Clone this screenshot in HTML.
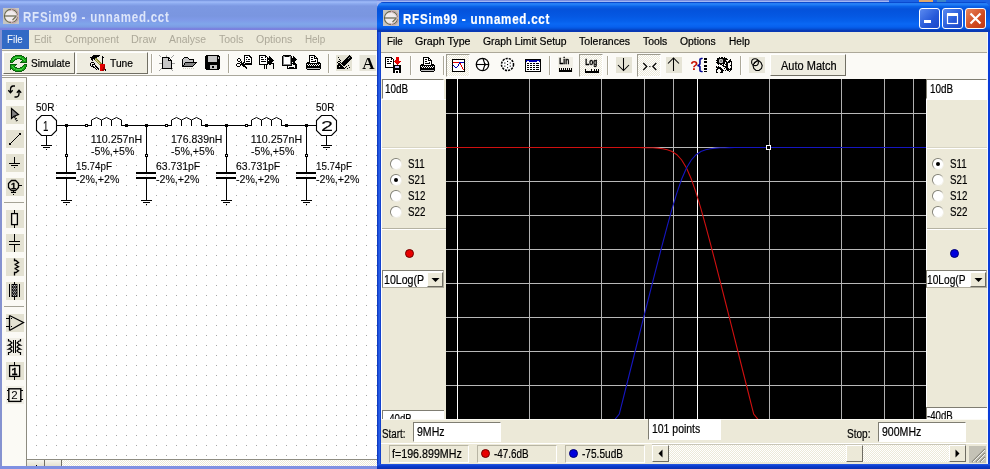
<!DOCTYPE html>
<html lang="en"><head><meta charset="utf-8"><title>RFSim99 - unnamed.cct</title>
<style>
html,body{margin:0;padding:0;}
body{width:990px;height:469px;overflow:hidden;background:#ece9d8;font-family:"Liberation Sans",sans-serif;font-size:11px;}
#screen{will-change:transform;position:relative;width:990px;height:469px;overflow:hidden;background:#ece9d8;}
#screen div,#screen span,#screen svg{position:absolute;box-sizing:border-box;}
.t{white-space:pre;line-height:16px;height:16px;font-family:"Liberation Sans",sans-serif;transform-origin:0 0;-webkit-text-stroke:0.22px currentColor;}
svg{overflow:visible;}

.raised{border:1px solid;border-color:#fff #716f64 #716f64 #fff;background:#efede1;}
.sunk{border:1px solid;border-color:#716f64 #fff #fff #716f64;background:#fff;}
.vsep{width:2px;border-left:1px solid #aca899;border-right:1px solid #fff;}

</style></head><body>
<div id="screen">
<div id="winL" style="left:0;top:0;width:377px;height:469px;"><div style="left:0px;top:0px;width:377px;height:30px;background:linear-gradient(#6f8cd8 0px,#8aa8ee 1px,#9fbaf8 2px,#8eacf0 3.5px,#7c98e2 6px,#7a96e0 16px,#7f9ae8 20px,#80a6ea 24px,#7c9ce4 27px,#7a80de 28.7px,#7a80de 30px);"></div>
<span class="t" style="left:23.30px;top:9.00px;font-size:13.81px;color:#dde6fa;font-weight:bold;letter-spacing:0.9px;transform:scaleX(0.8364);-webkit-text-stroke:0;">RFSim99 - unnamed.cct</span>
<div style="left:0px;top:30px;width:377px;height:20px;background:#ece9d8;"></div>
<div style="left:1px;top:30px;width:28px;height:19px;background:#316ac5;"></div>
<span class="t" style="left:6.50px;top:31.00px;font-size:11.63px;color:#fff;transform:scaleX(0.8427);-webkit-text-stroke:0;">File</span>
<span class="t" style="left:34.40px;top:31.00px;font-size:11.63px;color:#aca899;transform:scaleX(0.8737);-webkit-text-stroke:0;">Edit</span>
<span class="t" style="left:65.00px;top:31.00px;font-size:11.63px;color:#aca899;transform:scaleX(0.8966);-webkit-text-stroke:0;">Component</span>
<span class="t" style="left:131.40px;top:31.00px;font-size:11.63px;color:#aca899;transform:scaleX(0.9308);-webkit-text-stroke:0;">Draw</span>
<span class="t" style="left:168.90px;top:31.00px;font-size:11.63px;color:#aca899;transform:scaleX(0.8969);-webkit-text-stroke:0;">Analyse</span>
<span class="t" style="left:219.30px;top:31.00px;font-size:11.63px;color:#aca899;transform:scaleX(0.9024);-webkit-text-stroke:0;">Tools</span>
<span class="t" style="left:255.90px;top:31.00px;font-size:11.63px;color:#aca899;transform:scaleX(0.9080);-webkit-text-stroke:0;">Options</span>
<span class="t" style="left:304.70px;top:31.00px;font-size:11.63px;color:#aca899;transform:scaleX(0.8485);-webkit-text-stroke:0;">Help</span>
<div style="left:0px;top:50px;width:377px;height:1px;background:#aca899;"></div>
<div style="left:0px;top:51px;width:377px;height:24px;background:#fbfaf6;"></div>
<div style="left:0px;top:75px;width:377px;height:1px;background:#aaa89c;"></div>
<div style="left:0px;top:76px;width:377px;height:1px;background:#fff;"></div>
<div class="raised" style="left:3px;top:52px;width:72px;height:22px;"></div>
<span class="t" style="left:30.90px;top:55.00px;font-size:11.63px;color:#000;transform:scaleX(0.8688);">Simulate</span>
<div class="raised" style="left:76px;top:52px;width:72px;height:22px;"></div>
<span class="t" style="left:110.30px;top:55.00px;font-size:11.63px;color:#000;transform:scaleX(0.8821);">Tune</span>
<div class="vsep" style="left:151px;top:54px;width:2px;height:19px;"></div>
<div class="vsep" style="left:228px;top:54px;width:2px;height:19px;"></div>
<div class="vsep" style="left:328px;top:54px;width:2px;height:19px;"></div>
<div style="left:0px;top:30px;width:2px;height:439px;background:#8592d0;"></div>
<div style="left:2px;top:77px;width:24px;height:389px;background:#fbfaf5;"></div>
<div style="left:26px;top:77px;width:1px;height:389px;background:#8d8b80;"></div>
<div style="left:2px;top:77px;width:25px;height:1px;background:#a09e92;"></div>
<div style="left:6px;top:82px;width:18px;height:18px;background:#e4e2d2;"></div>
<div style="left:6px;top:106px;width:18px;height:18px;background:#e4e2d2;"></div>
<div style="left:6px;top:130px;width:18px;height:18px;background:#e4e2d2;"></div>
<div style="left:6px;top:154px;width:18px;height:18px;background:#e4e2d2;"></div>
<div style="left:6px;top:178px;width:18px;height:18px;background:#e4e2d2;"></div>
<div style="left:6px;top:210px;width:18px;height:18px;background:#e4e2d2;"></div>
<div style="left:6px;top:234px;width:18px;height:18px;background:#e4e2d2;"></div>
<div style="left:6px;top:258px;width:18px;height:18px;background:#e4e2d2;"></div>
<div style="left:6px;top:282px;width:18px;height:18px;background:#e4e2d2;"></div>
<div style="left:6px;top:314px;width:18px;height:18px;background:#e4e2d2;"></div>
<div style="left:6px;top:338px;width:18px;height:18px;background:#f1efe6;"></div>
<div style="left:6px;top:362px;width:18px;height:18px;background:#e4e2d2;"></div>
<div style="left:6px;top:386px;width:18px;height:18px;background:#f1efe6;"></div>
<div style="left:4px;top:202px;width:20px;height:1px;background:#a5a396;"></div>
<div style="left:4px;top:306px;width:20px;height:1px;background:#a5a396;"></div>
<div style="left:27px;top:77px;width:350px;height:382px;background-color:#fff;background-image:linear-gradient(90deg,#fff 9px,transparent 9px),linear-gradient(#fff 9px,#a8a8a8 9px);background-size:10px 10px;background-position:0px -1px;"></div>
<svg width="990" height="469" viewBox="0 0 990 469" style="left:0;top:0;pointer-events:none">
<g fill="none" stroke="#000" stroke-width="1" shape-rendering="crispEdges">
<path d="M57 125.5H86"/>
<rect x="85.5" y="124.5" width="2" height="2" fill="#fff"/>
<path d="M87.5 125.5H91.5V120.0"/>
<path d="M101.5 120.0V125.5M111.5 120.0V125.5M121.5 120.0V125.5H146.5"/>
<rect x="125.0" y="124.0" width="3" height="3" fill="#000" stroke="none"/>
<rect x="165.5" y="124.5" width="2" height="2" fill="#fff"/>
<path d="M167.5 125.5H171.5V120.0"/>
<path d="M181.5 120.0V125.5M191.5 120.0V125.5M201.5 120.0V125.5H226.5"/>
<rect x="205.0" y="124.0" width="3" height="3" fill="#000" stroke="none"/>
<rect x="245.5" y="124.5" width="2" height="2" fill="#fff"/>
<path d="M247.5 125.5H251.5V120.0"/>
<path d="M261.5 120.0V125.5M271.5 120.0V125.5M281.5 120.0V125.5H306.5"/>
<rect x="285.0" y="124.0" width="3" height="3" fill="#000" stroke="none"/>
<path d="M306 125.5H316M146 125.5H165M226 125.5H245"/>
<rect x="65.0" y="124.0" width="3" height="3" fill="#000" stroke="none"/>
<path d="M66.5 125.5V172M66.5 179V200"/>
<rect x="65.5" y="154.5" width="2" height="2" fill="#fff"/>
<rect x="56.0" y="172" width="20" height="2" fill="#000" stroke="none"/>
<rect x="56.0" y="177" width="20" height="2" fill="#000" stroke="none"/>
<path d="M61.0 200.5H72.0M63.0 202.5H70.0M66.0 204.5H67.0"/>
<rect x="145.0" y="124.0" width="3" height="3" fill="#000" stroke="none"/>
<path d="M146.5 125.5V172M146.5 179V200"/>
<rect x="145.5" y="154.5" width="2" height="2" fill="#fff"/>
<rect x="136.0" y="172" width="20" height="2" fill="#000" stroke="none"/>
<rect x="136.0" y="177" width="20" height="2" fill="#000" stroke="none"/>
<path d="M141.0 200.5H152.0M143.0 202.5H150.0M146.0 204.5H147.0"/>
<rect x="225.0" y="124.0" width="3" height="3" fill="#000" stroke="none"/>
<path d="M226.5 125.5V172M226.5 179V200"/>
<rect x="225.5" y="154.5" width="2" height="2" fill="#fff"/>
<rect x="216.0" y="172" width="20" height="2" fill="#000" stroke="none"/>
<rect x="216.0" y="177" width="20" height="2" fill="#000" stroke="none"/>
<path d="M221.0 200.5H232.0M223.0 202.5H230.0M226.0 204.5H227.0"/>
<rect x="305.0" y="124.0" width="3" height="3" fill="#000" stroke="none"/>
<path d="M306.5 125.5V172M306.5 179V200"/>
<rect x="305.5" y="154.5" width="2" height="2" fill="#fff"/>
<rect x="296.0" y="172" width="20" height="2" fill="#000" stroke="none"/>
<rect x="296.0" y="177" width="20" height="2" fill="#000" stroke="none"/>
<path d="M301.0 200.5H312.0M303.0 202.5H310.0M306.0 204.5H307.0"/>
<path d="M46.5 136V145M41.0 145.5H52.0M43.0 147.5H50.0M46.0 149.5H47.0"/>
<path d="M326.5 136V145M321.0 145.5H332.0M323.0 147.5H330.0M326.0 149.5H327.0"/>
</g>
<g fill="none" stroke="#000" stroke-width="1">
<path d="M91.5 120.0L93.5 119.0L96.5 117.5L99.5 119.0L101.5 120.0M101.5 120.0L103.5 119.0L106.5 117.5L109.5 119.0L111.5 120.0M111.5 120.0L113.5 119.0L116.5 117.5L119.5 119.0L121.5 120.0"/>
<path d="M171.5 120.0L173.5 119.0L176.5 117.5L179.5 119.0L181.5 120.0M181.5 120.0L183.5 119.0L186.5 117.5L189.5 119.0L191.5 120.0M191.5 120.0L193.5 119.0L196.5 117.5L199.5 119.0L201.5 120.0"/>
<path d="M251.5 120.0L253.5 119.0L256.5 117.5L259.5 119.0L261.5 120.0M261.5 120.0L263.5 119.0L266.5 117.5L269.5 119.0L271.5 120.0M271.5 120.0L273.5 119.0L276.5 117.5L279.5 119.0L281.5 120.0"/>
<polygon points="41.5,115.5 51.5,115.5 56.5,120.5 56.5,130.5 51.5,135.5 41.5,135.5 36.5,130.5 36.5,120.5" fill="#fff" stroke-width="1.1"/>
<polygon points="321.5,115.5 331.5,115.5 336.5,120.5 336.5,130.5 331.5,135.5 321.5,135.5 316.5,130.5 316.5,120.5" fill="#fff" stroke-width="1.1"/>
</g>
</svg>
<span class="t" style="left:36.00px;top:99.00px;font-size:10.67px;color:#000;transform:scaleX(0.9398);-webkit-text-stroke:0.1px #000;">50R</span>
<span class="t" style="left:316.00px;top:99.00px;font-size:10.67px;color:#000;transform:scaleX(0.9398);-webkit-text-stroke:0.1px #000;">50R</span>
<span class="t" style="left:43.40px;top:118.00px;font-size:14.50px;color:#000;transform:scaleX(0.6710);-webkit-text-stroke:0.1px #000;">1</span>
<span class="t" style="left:321.40px;top:118.00px;font-size:14.50px;color:#000;transform:scaleX(1.4911);-webkit-text-stroke:0.1px #000;">2</span>
<span class="t" style="left:90.80px;top:131.00px;font-size:10.67px;color:#000;-webkit-text-stroke:0.1px #000;">110.257nH</span>
<span class="t" style="left:91.20px;top:143.00px;font-size:10.67px;color:#000;transform:scaleX(0.9957);-webkit-text-stroke:0.1px #000;">-5%,+5%</span>
<span class="t" style="left:170.80px;top:131.00px;font-size:10.67px;color:#000;transform:scaleX(0.9865);-webkit-text-stroke:0.1px #000;">176.839nH</span>
<span class="t" style="left:171.20px;top:143.00px;font-size:10.67px;color:#000;transform:scaleX(0.9957);-webkit-text-stroke:0.1px #000;">-5%,+5%</span>
<span class="t" style="left:250.80px;top:131.00px;font-size:10.67px;color:#000;-webkit-text-stroke:0.1px #000;">110.257nH</span>
<span class="t" style="left:251.20px;top:143.00px;font-size:10.67px;color:#000;transform:scaleX(0.9957);-webkit-text-stroke:0.1px #000;">-5%,+5%</span>
<span class="t" style="left:76.00px;top:158.00px;font-size:10.67px;color:#000;transform:scaleX(0.9193);-webkit-text-stroke:0.1px #000;">15.74pF</span>
<span class="t" style="left:76.30px;top:171.00px;font-size:10.67px;color:#000;transform:scaleX(0.9957);-webkit-text-stroke:0.1px #000;">-2%,+2%</span>
<span class="t" style="left:155.50px;top:158.00px;font-size:10.67px;color:#000;transform:scaleX(0.9827);-webkit-text-stroke:0.1px #000;">63.731pF</span>
<span class="t" style="left:156.30px;top:171.00px;font-size:10.67px;color:#000;transform:scaleX(0.9957);-webkit-text-stroke:0.1px #000;">-2%,+2%</span>
<span class="t" style="left:235.50px;top:158.00px;font-size:10.67px;color:#000;transform:scaleX(0.9827);-webkit-text-stroke:0.1px #000;">63.731pF</span>
<span class="t" style="left:236.30px;top:171.00px;font-size:10.67px;color:#000;transform:scaleX(0.9957);-webkit-text-stroke:0.1px #000;">-2%,+2%</span>
<span class="t" style="left:316.00px;top:158.00px;font-size:10.67px;color:#000;transform:scaleX(0.9193);-webkit-text-stroke:0.1px #000;">15.74pF</span>
<span class="t" style="left:316.30px;top:171.00px;font-size:10.67px;color:#000;transform:scaleX(0.9957);-webkit-text-stroke:0.1px #000;">-2%,+2%</span>
<div style="left:27px;top:459px;width:350px;height:7px;background:#f4f3ee;background-image:repeating-conic-gradient(#fff 0% 25%,#ece9d8 0% 50%);background-size:2px 2px;"></div>
<div style="left:27px;top:460px;width:17px;height:6px;background:linear-gradient(#f6f5ee,#e4e1d0);"></div>
<div style="left:44px;top:460px;width:1px;height:6px;background:#716f64;"></div>
<div style="left:45px;top:460px;width:16px;height:6px;background:linear-gradient(#f6f5ee,#e4e1d0);"></div>
<div style="left:61px;top:460px;width:1px;height:6px;background:#716f64;"></div>
<div style="left:36px;top:465px;width:1px;height:1px;background:#000;"></div>
<div style="left:27px;top:459px;width:350px;height:1px;background:#8d8b80;"></div>
<div style="left:0px;top:466px;width:377px;height:3px;background:#7f90e2;"></div>
<svg width="990" height="469" viewBox="0 0 990 469" style="left:0;top:0;pointer-events:none" font-family="Liberation Sans, sans-serif">
<g transform="translate(3 8)" ><rect x="0" y="0" width="16" height="16" fill="#c6c6c2"/><circle cx="8" cy="8" r="6.6" fill="#f1ecec" stroke="#6a6a50" stroke-width="1.1"/><path d="M1.5 8H14.5" stroke="#5a5a40" stroke-width="1.1" fill="none"/><path d="M14.4 8A4.4 4.4 0 0 0 6.5 3.2M14.4 8A4.4 4.4 0 0 1 6.5 12.8" stroke="#c8a0a8" stroke-width="1" fill="none"/><path d="M14.4 8A9 9 0 0 0 8 2M14.4 8A9 9 0 0 1 8 14" stroke="#d8c0c4" stroke-width="0.8" fill="none"/><path d="M9.5 12L13 8.5" stroke="#6a6a50" stroke-width="1.1"/></g>
<g transform="translate(10 55)" ><g shape-rendering="crispEdges"><rect x="5" y="0" width="7" height="1" fill="#0a5e0a"/><rect x="3" y="1" width="2" height="1" fill="#0a5e0a"/><rect x="5" y="1" width="7" height="1" fill="#16a616"/><rect x="12" y="1" width="2" height="1" fill="#0a5e0a"/><rect x="2" y="2" width="1" height="1" fill="#0a5e0a"/><rect x="3" y="2" width="2" height="1" fill="#16a616"/><rect x="5" y="2" width="6" height="1" fill="#48d048"/><rect x="11" y="2" width="3" height="1" fill="#16a616"/><rect x="14" y="2" width="1" height="1" fill="#0a5e0a"/><rect x="16" y="2" width="1" height="1" fill="#0a5e0a"/><rect x="1" y="3" width="1" height="1" fill="#0a5e0a"/><rect x="2" y="3" width="2" height="1" fill="#16a616"/><rect x="4" y="3" width="1" height="1" fill="#48d048"/><rect x="5" y="3" width="2" height="1" fill="#16a616"/><rect x="7" y="3" width="3" height="1" fill="#0a5e0a"/><rect x="10" y="3" width="2" height="1" fill="#16a616"/><rect x="12" y="3" width="1" height="1" fill="#48d048"/><rect x="13" y="3" width="2" height="1" fill="#16a616"/><rect x="15" y="3" width="2" height="1" fill="#0a5e0a"/><rect x="1" y="4" width="1" height="1" fill="#0a5e0a"/><rect x="2" y="4" width="1" height="1" fill="#16a616"/><rect x="3" y="4" width="1" height="1" fill="#48d048"/><rect x="4" y="4" width="1" height="1" fill="#16a616"/><rect x="5" y="4" width="2" height="1" fill="#0a5e0a"/><rect x="10" y="4" width="2" height="1" fill="#0a5e0a"/><rect x="12" y="4" width="1" height="1" fill="#16a616"/><rect x="13" y="4" width="1" height="1" fill="#48d048"/><rect x="14" y="4" width="2" height="1" fill="#16a616"/><rect x="16" y="4" width="1" height="1" fill="#0a5e0a"/><rect x="0" y="5" width="1" height="1" fill="#0a5e0a"/><rect x="1" y="5" width="3" height="1" fill="#16a616"/><rect x="4" y="5" width="1" height="1" fill="#0a5e0a"/><rect x="12" y="5" width="1" height="1" fill="#0a5e0a"/><rect x="13" y="5" width="1" height="1" fill="#16a616"/><rect x="14" y="5" width="1" height="1" fill="#48d048"/><rect x="15" y="5" width="1" height="1" fill="#16a616"/><rect x="16" y="5" width="1" height="1" fill="#0a5e0a"/><rect x="0" y="6" width="1" height="1" fill="#0a5e0a"/><rect x="1" y="6" width="2" height="1" fill="#16a616"/><rect x="3" y="6" width="1" height="1" fill="#0a5e0a"/><rect x="11" y="6" width="1" height="1" fill="#0a5e0a"/><rect x="12" y="6" width="4" height="1" fill="#16a616"/><rect x="16" y="6" width="1" height="1" fill="#0a5e0a"/><rect x="0" y="7" width="3" height="1" fill="#0a5e0a"/><rect x="10" y="7" width="7" height="1" fill="#0a5e0a"/><rect x="0" y="9" width="7" height="1" fill="#0a5e0a"/><rect x="14" y="9" width="3" height="1" fill="#0a5e0a"/><rect x="0" y="10" width="1" height="1" fill="#0a5e0a"/><rect x="1" y="10" width="4" height="1" fill="#16a616"/><rect x="5" y="10" width="1" height="1" fill="#0a5e0a"/><rect x="13" y="10" width="1" height="1" fill="#0a5e0a"/><rect x="14" y="10" width="2" height="1" fill="#16a616"/><rect x="16" y="10" width="1" height="1" fill="#0a5e0a"/><rect x="0" y="11" width="1" height="1" fill="#0a5e0a"/><rect x="1" y="11" width="1" height="1" fill="#16a616"/><rect x="2" y="11" width="1" height="1" fill="#48d048"/><rect x="3" y="11" width="1" height="1" fill="#16a616"/><rect x="4" y="11" width="1" height="1" fill="#0a5e0a"/><rect x="12" y="11" width="1" height="1" fill="#0a5e0a"/><rect x="13" y="11" width="3" height="1" fill="#16a616"/><rect x="16" y="11" width="1" height="1" fill="#0a5e0a"/><rect x="0" y="12" width="1" height="1" fill="#0a5e0a"/><rect x="1" y="12" width="2" height="1" fill="#16a616"/><rect x="3" y="12" width="1" height="1" fill="#48d048"/><rect x="4" y="12" width="1" height="1" fill="#16a616"/><rect x="5" y="12" width="2" height="1" fill="#0a5e0a"/><rect x="10" y="12" width="2" height="1" fill="#0a5e0a"/><rect x="12" y="12" width="1" height="1" fill="#16a616"/><rect x="13" y="12" width="1" height="1" fill="#48d048"/><rect x="14" y="12" width="1" height="1" fill="#16a616"/><rect x="15" y="12" width="1" height="1" fill="#0a5e0a"/><rect x="0" y="13" width="2" height="1" fill="#0a5e0a"/><rect x="2" y="13" width="2" height="1" fill="#16a616"/><rect x="4" y="13" width="1" height="1" fill="#48d048"/><rect x="5" y="13" width="2" height="1" fill="#16a616"/><rect x="7" y="13" width="3" height="1" fill="#0a5e0a"/><rect x="10" y="13" width="2" height="1" fill="#16a616"/><rect x="12" y="13" width="1" height="1" fill="#48d048"/><rect x="13" y="13" width="2" height="1" fill="#16a616"/><rect x="15" y="13" width="1" height="1" fill="#0a5e0a"/><rect x="0" y="14" width="1" height="1" fill="#0a5e0a"/><rect x="2" y="14" width="1" height="1" fill="#0a5e0a"/><rect x="3" y="14" width="3" height="1" fill="#16a616"/><rect x="6" y="14" width="6" height="1" fill="#48d048"/><rect x="12" y="14" width="2" height="1" fill="#16a616"/><rect x="14" y="14" width="1" height="1" fill="#0a5e0a"/><rect x="3" y="15" width="2" height="1" fill="#0a5e0a"/><rect x="5" y="15" width="7" height="1" fill="#16a616"/><rect x="12" y="15" width="2" height="1" fill="#0a5e0a"/><rect x="5" y="16" width="7" height="1" fill="#0a5e0a"/></g></g>
<g transform="translate(90 55)" ><g shape-rendering="crispEdges"><rect x="3" y="0" width="7" height="1" fill="#000"/><rect x="2" y="1" width="7" height="1" fill="#000"/><rect x="12" y="1" width="1" height="1" fill="#000"/><rect x="0" y="2" width="7" height="1" fill="#000"/><rect x="12" y="2" width="2" height="1" fill="#000"/><rect x="1" y="3" width="4" height="1" fill="#000"/><rect x="5" y="3" width="2" height="1" fill="#8c8c3c"/><rect x="12" y="3" width="1" height="1" fill="#000"/><rect x="1" y="4" width="2" height="1" fill="#000"/><rect x="4" y="4" width="1" height="1" fill="#000"/><rect x="5" y="4" width="1" height="1" fill="#dcdc94"/><rect x="6" y="4" width="2" height="1" fill="#8c8c3c"/><rect x="12" y="4" width="1" height="1" fill="#000"/><rect x="2" y="5" width="1" height="1" fill="#000"/><rect x="5" y="5" width="1" height="1" fill="#8c8c3c"/><rect x="6" y="5" width="1" height="1" fill="#dcdc94"/><rect x="7" y="5" width="2" height="1" fill="#8c8c3c"/><rect x="12" y="5" width="1" height="1" fill="#000"/><rect x="6" y="6" width="1" height="1" fill="#8c8c3c"/><rect x="7" y="6" width="1" height="1" fill="#dcdc94"/><rect x="8" y="6" width="2" height="1" fill="#8c8c3c"/><rect x="12" y="6" width="1" height="1" fill="#000"/><rect x="1" y="7" width="3" height="1" fill="#000"/><rect x="7" y="7" width="1" height="1" fill="#8c8c3c"/><rect x="8" y="7" width="1" height="1" fill="#dcdc94"/><rect x="9" y="7" width="2" height="1" fill="#8c8c3c"/><rect x="12" y="7" width="1" height="1" fill="#000"/><rect x="0" y="8" width="1" height="1" fill="#000"/><rect x="4" y="8" width="1" height="1" fill="#000"/><rect x="8" y="8" width="1" height="1" fill="#8c8c3c"/><rect x="9" y="8" width="1" height="1" fill="#dcdc94"/><rect x="10" y="8" width="2" height="1" fill="#8c8c3c"/><rect x="12" y="8" width="1" height="1" fill="#000"/><rect x="0" y="9" width="1" height="1" fill="#000"/><rect x="2" y="9" width="3" height="1" fill="#000"/><rect x="9" y="9" width="1" height="1" fill="#8c8c3c"/><rect x="10" y="9" width="5" height="1" fill="#e60000"/><rect x="0" y="10" width="1" height="1" fill="#000"/><rect x="2" y="10" width="1" height="1" fill="#000"/><rect x="5" y="10" width="1" height="1" fill="#000"/><rect x="10" y="10" width="4" height="1" fill="#e60000"/><rect x="14" y="10" width="1" height="1" fill="#a00000"/><rect x="1" y="11" width="3" height="1" fill="#000"/><rect x="5" y="11" width="2" height="1" fill="#000"/><rect x="10" y="11" width="4" height="1" fill="#e60000"/><rect x="14" y="11" width="1" height="1" fill="#a00000"/><rect x="3" y="12" width="2" height="1" fill="#000"/><rect x="6" y="12" width="2" height="1" fill="#000"/><rect x="10" y="12" width="3" height="1" fill="#e60000"/><rect x="13" y="12" width="2" height="1" fill="#a00000"/><rect x="5" y="13" width="1" height="1" fill="#000"/><rect x="7" y="13" width="2" height="1" fill="#000"/><rect x="10" y="13" width="3" height="1" fill="#e60000"/><rect x="13" y="13" width="2" height="1" fill="#a00000"/><rect x="6" y="14" width="1" height="1" fill="#000"/><rect x="8" y="14" width="1" height="1" fill="#000"/><rect x="10" y="14" width="2" height="1" fill="#e60000"/><rect x="12" y="14" width="3" height="1" fill="#a00000"/><rect x="15" y="14" width="1" height="1" fill="#000"/><rect x="10" y="15" width="2" height="1" fill="#e60000"/><rect x="12" y="15" width="2" height="1" fill="#a00000"/><rect x="15" y="15" width="1" height="1" fill="#000"/></g></g>
<g transform="translate(159 55)" ><g shape-rendering="crispEdges"><rect x="0" y="0" width="1" height="1" fill="#a0a0a0"/><rect x="7" y="0" width="1" height="1" fill="#a0a0a0"/><rect x="14" y="0" width="1" height="1" fill="#a0a0a0"/><rect x="1" y="1" width="1" height="1" fill="#a0a0a0"/><rect x="7" y="1" width="1" height="1" fill="#a0a0a0"/><rect x="13" y="1" width="1" height="1" fill="#a0a0a0"/><rect x="3" y="2" width="7" height="1" fill="#000"/><rect x="10" y="2" width="1" height="1" fill="#a0a0a0"/><rect x="12" y="2" width="1" height="1" fill="#a0a0a0"/><rect x="3" y="3" width="1" height="1" fill="#000"/><rect x="4" y="3" width="5" height="1" fill="#c6c6c6"/><rect x="9" y="3" width="2" height="1" fill="#000"/><rect x="3" y="4" width="1" height="1" fill="#000"/><rect x="4" y="4" width="5" height="1" fill="#c6c6c6"/><rect x="9" y="4" width="1" height="1" fill="#000"/><rect x="10" y="4" width="1" height="1" fill="#fff"/><rect x="11" y="4" width="1" height="1" fill="#000"/><rect x="3" y="5" width="1" height="1" fill="#000"/><rect x="4" y="5" width="5" height="1" fill="#c6c6c6"/><rect x="9" y="5" width="4" height="1" fill="#000"/><rect x="3" y="6" width="1" height="1" fill="#000"/><rect x="4" y="6" width="8" height="1" fill="#c6c6c6"/><rect x="12" y="6" width="1" height="1" fill="#000"/><rect x="3" y="7" width="1" height="1" fill="#000"/><rect x="4" y="7" width="8" height="1" fill="#c6c6c6"/><rect x="12" y="7" width="1" height="1" fill="#000"/><rect x="0" y="8" width="3" height="1" fill="#a0a0a0"/><rect x="3" y="8" width="1" height="1" fill="#000"/><rect x="4" y="8" width="8" height="1" fill="#c6c6c6"/><rect x="12" y="8" width="1" height="1" fill="#000"/><rect x="13" y="8" width="3" height="1" fill="#a0a0a0"/><rect x="3" y="9" width="1" height="1" fill="#000"/><rect x="4" y="9" width="8" height="1" fill="#c6c6c6"/><rect x="12" y="9" width="1" height="1" fill="#000"/><rect x="3" y="10" width="1" height="1" fill="#000"/><rect x="4" y="10" width="8" height="1" fill="#c6c6c6"/><rect x="12" y="10" width="1" height="1" fill="#000"/><rect x="3" y="11" width="1" height="1" fill="#000"/><rect x="4" y="11" width="8" height="1" fill="#c6c6c6"/><rect x="12" y="11" width="1" height="1" fill="#000"/><rect x="3" y="12" width="1" height="1" fill="#000"/><rect x="4" y="12" width="8" height="1" fill="#c6c6c6"/><rect x="12" y="12" width="1" height="1" fill="#000"/><rect x="2" y="13" width="1" height="1" fill="#a0a0a0"/><rect x="3" y="13" width="10" height="1" fill="#000"/><rect x="13" y="13" width="1" height="1" fill="#a0a0a0"/><rect x="1" y="14" width="1" height="1" fill="#a0a0a0"/><rect x="12" y="14" width="1" height="1" fill="#a0a0a0"/><rect x="0" y="15" width="1" height="1" fill="#a0a0a0"/><rect x="13" y="15" width="1" height="1" fill="#a0a0a0"/></g></g>
<g transform="translate(182 55)" ><g shape-rendering="crispEdges"><rect x="2" y="2" width="4" height="1" fill="#000"/><rect x="1" y="3" width="1" height="1" fill="#000"/><rect x="2" y="3" width="4" height="1" fill="#c6c6c6"/><rect x="6" y="3" width="1" height="1" fill="#000"/><rect x="0" y="4" width="1" height="1" fill="#000"/><rect x="1" y="4" width="6" height="1" fill="#c6c6c6"/><rect x="7" y="4" width="5" height="1" fill="#000"/><rect x="0" y="5" width="1" height="1" fill="#000"/><rect x="1" y="5" width="10" height="1" fill="#c6c6c6"/><rect x="11" y="5" width="1" height="1" fill="#000"/><rect x="0" y="6" width="1" height="1" fill="#000"/><rect x="1" y="6" width="10" height="1" fill="#c6c6c6"/><rect x="11" y="6" width="1" height="1" fill="#000"/><rect x="0" y="7" width="1" height="1" fill="#000"/><rect x="1" y="7" width="2" height="1" fill="#c6c6c6"/><rect x="3" y="7" width="12" height="1" fill="#000"/><rect x="0" y="8" width="1" height="1" fill="#000"/><rect x="1" y="8" width="1" height="1" fill="#c6c6c6"/><rect x="2" y="8" width="1" height="1" fill="#000"/><rect x="3" y="8" width="10" height="1" fill="#868686"/><rect x="13" y="8" width="1" height="1" fill="#000"/><rect x="0" y="9" width="1" height="1" fill="#000"/><rect x="1" y="9" width="1" height="1" fill="#c6c6c6"/><rect x="2" y="9" width="1" height="1" fill="#000"/><rect x="3" y="9" width="9" height="1" fill="#868686"/><rect x="12" y="9" width="1" height="1" fill="#000"/><rect x="0" y="10" width="2" height="1" fill="#000"/><rect x="2" y="10" width="9" height="1" fill="#868686"/><rect x="11" y="10" width="1" height="1" fill="#000"/><rect x="0" y="11" width="11" height="1" fill="#000"/><rect x="1" y="13" width="1" height="1" fill="#d0cdbc"/><rect x="3" y="13" width="1" height="1" fill="#d0cdbc"/><rect x="5" y="13" width="1" height="1" fill="#d0cdbc"/><rect x="7" y="13" width="1" height="1" fill="#d0cdbc"/><rect x="9" y="13" width="1" height="1" fill="#d0cdbc"/><rect x="11" y="13" width="1" height="1" fill="#d0cdbc"/></g></g>
<g transform="translate(205 55)" ><g shape-rendering="crispEdges"><rect x="1" y="0" width="13" height="1" fill="#000"/><rect x="0" y="1" width="3" height="1" fill="#000"/><rect x="3" y="1" width="9" height="1" fill="#c6c6c6"/><rect x="12" y="1" width="3" height="1" fill="#000"/><rect x="0" y="2" width="3" height="1" fill="#000"/><rect x="3" y="2" width="9" height="1" fill="#c6c6c6"/><rect x="12" y="2" width="1" height="1" fill="#000"/><rect x="13" y="2" width="1" height="1" fill="#c6c6c6"/><rect x="14" y="2" width="1" height="1" fill="#000"/><rect x="0" y="3" width="3" height="1" fill="#000"/><rect x="3" y="3" width="9" height="1" fill="#c6c6c6"/><rect x="12" y="3" width="1" height="1" fill="#000"/><rect x="13" y="3" width="1" height="1" fill="#c6c6c6"/><rect x="14" y="3" width="1" height="1" fill="#000"/><rect x="0" y="4" width="3" height="1" fill="#000"/><rect x="3" y="4" width="9" height="1" fill="#c6c6c6"/><rect x="12" y="4" width="3" height="1" fill="#000"/><rect x="0" y="5" width="3" height="1" fill="#000"/><rect x="3" y="5" width="9" height="1" fill="#c6c6c6"/><rect x="12" y="5" width="3" height="1" fill="#000"/><rect x="0" y="6" width="3" height="1" fill="#000"/><rect x="3" y="6" width="9" height="1" fill="#c6c6c6"/><rect x="12" y="6" width="3" height="1" fill="#000"/><rect x="0" y="7" width="15" height="1" fill="#000"/><rect x="0" y="8" width="15" height="1" fill="#000"/><rect x="0" y="9" width="15" height="1" fill="#000"/><rect x="0" y="10" width="5" height="1" fill="#000"/><rect x="5" y="10" width="7" height="1" fill="#c6c6c6"/><rect x="12" y="10" width="3" height="1" fill="#000"/><rect x="0" y="11" width="5" height="1" fill="#000"/><rect x="5" y="11" width="2" height="1" fill="#c6c6c6"/><rect x="7" y="11" width="2" height="1" fill="#000"/><rect x="9" y="11" width="3" height="1" fill="#c6c6c6"/><rect x="12" y="11" width="3" height="1" fill="#000"/><rect x="0" y="12" width="5" height="1" fill="#000"/><rect x="5" y="12" width="2" height="1" fill="#c6c6c6"/><rect x="7" y="12" width="2" height="1" fill="#000"/><rect x="9" y="12" width="3" height="1" fill="#c6c6c6"/><rect x="12" y="12" width="3" height="1" fill="#000"/><rect x="0" y="13" width="5" height="1" fill="#000"/><rect x="5" y="13" width="7" height="1" fill="#c6c6c6"/><rect x="12" y="13" width="3" height="1" fill="#000"/><rect x="1" y="14" width="13" height="1" fill="#000"/></g></g>
<g transform="translate(236 55)" ><g shape-rendering="crispEdges"><rect x="8" y="0" width="6" height="1" fill="#000"/><rect x="8" y="1" width="1" height="1" fill="#000"/><rect x="9" y="1" width="4" height="1" fill="#fff"/><rect x="13" y="1" width="2" height="1" fill="#000"/><rect x="8" y="2" width="1" height="1" fill="#000"/><rect x="9" y="2" width="1" height="1" fill="#fff"/><rect x="10" y="2" width="2" height="1" fill="#000"/><rect x="12" y="2" width="2" height="1" fill="#fff"/><rect x="14" y="2" width="2" height="1" fill="#000"/><rect x="2" y="3" width="2" height="1" fill="#000"/><rect x="8" y="3" width="1" height="1" fill="#000"/><rect x="9" y="3" width="6" height="1" fill="#fff"/><rect x="15" y="3" width="1" height="1" fill="#000"/><rect x="1" y="4" width="1" height="1" fill="#000"/><rect x="4" y="4" width="1" height="1" fill="#000"/><rect x="8" y="4" width="1" height="1" fill="#000"/><rect x="9" y="4" width="1" height="1" fill="#fff"/><rect x="10" y="4" width="1" height="1" fill="#000"/><rect x="11" y="4" width="1" height="1" fill="#fff"/><rect x="12" y="4" width="2" height="1" fill="#000"/><rect x="14" y="4" width="1" height="1" fill="#fff"/><rect x="15" y="4" width="1" height="1" fill="#000"/><rect x="1" y="5" width="1" height="1" fill="#000"/><rect x="4" y="5" width="1" height="1" fill="#000"/><rect x="8" y="5" width="1" height="1" fill="#000"/><rect x="9" y="5" width="6" height="1" fill="#fff"/><rect x="15" y="5" width="1" height="1" fill="#000"/><rect x="2" y="6" width="2" height="1" fill="#000"/><rect x="5" y="6" width="1" height="1" fill="#000"/><rect x="8" y="6" width="1" height="1" fill="#000"/><rect x="9" y="6" width="1" height="1" fill="#fff"/><rect x="10" y="6" width="4" height="1" fill="#000"/><rect x="14" y="6" width="1" height="1" fill="#fff"/><rect x="15" y="6" width="1" height="1" fill="#000"/><rect x="4" y="7" width="2" height="1" fill="#000"/><rect x="7" y="7" width="2" height="1" fill="#000"/><rect x="9" y="7" width="6" height="1" fill="#fff"/><rect x="15" y="7" width="1" height="1" fill="#000"/><rect x="1" y="8" width="3" height="1" fill="#000"/><rect x="5" y="8" width="3" height="1" fill="#000"/><rect x="9" y="8" width="7" height="1" fill="#000"/><rect x="0" y="9" width="1" height="1" fill="#000"/><rect x="4" y="9" width="12" height="1" fill="#000"/><rect x="0" y="10" width="1" height="1" fill="#000"/><rect x="4" y="10" width="1" height="1" fill="#000"/><rect x="6" y="10" width="3" height="1" fill="#000"/><rect x="1" y="11" width="3" height="1" fill="#000"/><rect x="7" y="11" width="3" height="1" fill="#000"/><rect x="9" y="12" width="2" height="1" fill="#000"/><rect x="10" y="13" width="1" height="1" fill="#000"/></g></g>
<g transform="translate(259 55)" ><g shape-rendering="crispEdges"><rect x="0" y="0" width="7" height="1" fill="#000"/><rect x="0" y="1" width="1" height="1" fill="#000"/><rect x="1" y="1" width="5" height="1" fill="#fff"/><rect x="6" y="1" width="2" height="1" fill="#000"/><rect x="10" y="1" width="1" height="1" fill="#000"/><rect x="0" y="2" width="1" height="1" fill="#000"/><rect x="1" y="2" width="1" height="1" fill="#fff"/><rect x="2" y="2" width="2" height="1" fill="#000"/><rect x="4" y="2" width="2" height="1" fill="#fff"/><rect x="6" y="2" width="1" height="1" fill="#000"/><rect x="7" y="2" width="1" height="1" fill="#fff"/><rect x="8" y="2" width="1" height="1" fill="#000"/><rect x="10" y="2" width="2" height="1" fill="#000"/><rect x="0" y="3" width="1" height="1" fill="#000"/><rect x="1" y="3" width="7" height="1" fill="#fff"/><rect x="8" y="3" width="5" height="1" fill="#000"/><rect x="0" y="4" width="1" height="1" fill="#000"/><rect x="1" y="4" width="1" height="1" fill="#fff"/><rect x="2" y="4" width="3" height="1" fill="#000"/><rect x="5" y="4" width="1" height="1" fill="#fff"/><rect x="6" y="4" width="1" height="1" fill="#000"/><rect x="7" y="4" width="1" height="1" fill="#fff"/><rect x="8" y="4" width="6" height="1" fill="#000"/><rect x="0" y="5" width="1" height="1" fill="#000"/><rect x="1" y="5" width="7" height="1" fill="#fff"/><rect x="8" y="5" width="1" height="1" fill="#000"/><rect x="9" y="5" width="1" height="1" fill="#fff"/><rect x="10" y="5" width="5" height="1" fill="#000"/><rect x="0" y="6" width="1" height="1" fill="#000"/><rect x="1" y="6" width="1" height="1" fill="#fff"/><rect x="2" y="6" width="5" height="1" fill="#000"/><rect x="7" y="6" width="1" height="1" fill="#fff"/><rect x="8" y="6" width="6" height="1" fill="#000"/><rect x="0" y="7" width="1" height="1" fill="#000"/><rect x="1" y="7" width="7" height="1" fill="#fff"/><rect x="8" y="7" width="5" height="1" fill="#000"/><rect x="0" y="8" width="1" height="1" fill="#000"/><rect x="1" y="8" width="7" height="1" fill="#fff"/><rect x="8" y="8" width="7" height="1" fill="#000"/><rect x="0" y="9" width="9" height="1" fill="#000"/><rect x="10" y="9" width="2" height="1" fill="#000"/><rect x="14" y="9" width="1" height="1" fill="#000"/><rect x="5" y="10" width="1" height="1" fill="#000"/><rect x="7" y="10" width="1" height="1" fill="#000"/><rect x="14" y="10" width="1" height="1" fill="#000"/><rect x="5" y="11" width="1" height="1" fill="#000"/><rect x="7" y="11" width="1" height="1" fill="#000"/><rect x="14" y="11" width="1" height="1" fill="#000"/><rect x="5" y="12" width="1" height="1" fill="#000"/><rect x="7" y="12" width="1" height="1" fill="#000"/><rect x="14" y="12" width="1" height="1" fill="#000"/><rect x="5" y="13" width="1" height="1" fill="#000"/><rect x="7" y="13" width="1" height="1" fill="#000"/><rect x="14" y="13" width="1" height="1" fill="#000"/></g></g>
<g transform="translate(282 55)" ><g shape-rendering="crispEdges"><rect x="1" y="0" width="8" height="1" fill="#000"/><rect x="0" y="1" width="1" height="1" fill="#000"/><rect x="1" y="1" width="2" height="1" fill="#868686"/><rect x="3" y="1" width="4" height="1" fill="#000"/><rect x="7" y="1" width="2" height="1" fill="#868686"/><rect x="9" y="1" width="1" height="1" fill="#000"/><rect x="11" y="1" width="1" height="1" fill="#000"/><rect x="0" y="2" width="1" height="1" fill="#000"/><rect x="1" y="2" width="1" height="1" fill="#868686"/><rect x="2" y="2" width="6" height="1" fill="#fff"/><rect x="8" y="2" width="1" height="1" fill="#868686"/><rect x="9" y="2" width="1" height="1" fill="#000"/><rect x="11" y="2" width="2" height="1" fill="#000"/><rect x="0" y="3" width="1" height="1" fill="#000"/><rect x="1" y="3" width="1" height="1" fill="#868686"/><rect x="2" y="3" width="6" height="1" fill="#fff"/><rect x="8" y="3" width="1" height="1" fill="#868686"/><rect x="9" y="3" width="5" height="1" fill="#000"/><rect x="0" y="4" width="1" height="1" fill="#000"/><rect x="1" y="4" width="1" height="1" fill="#868686"/><rect x="2" y="4" width="6" height="1" fill="#fff"/><rect x="8" y="4" width="1" height="1" fill="#868686"/><rect x="9" y="4" width="6" height="1" fill="#000"/><rect x="0" y="5" width="1" height="1" fill="#000"/><rect x="1" y="5" width="1" height="1" fill="#868686"/><rect x="2" y="5" width="6" height="1" fill="#fff"/><rect x="8" y="5" width="1" height="1" fill="#868686"/><rect x="9" y="5" width="5" height="1" fill="#000"/><rect x="0" y="6" width="1" height="1" fill="#000"/><rect x="1" y="6" width="1" height="1" fill="#868686"/><rect x="2" y="6" width="6" height="1" fill="#fff"/><rect x="8" y="6" width="1" height="1" fill="#868686"/><rect x="9" y="6" width="4" height="1" fill="#000"/><rect x="0" y="7" width="1" height="1" fill="#000"/><rect x="1" y="7" width="1" height="1" fill="#868686"/><rect x="2" y="7" width="6" height="1" fill="#fff"/><rect x="8" y="7" width="1" height="1" fill="#868686"/><rect x="9" y="7" width="1" height="1" fill="#000"/><rect x="10" y="7" width="1" height="1" fill="#fff"/><rect x="11" y="7" width="2" height="1" fill="#000"/><rect x="0" y="8" width="1" height="1" fill="#000"/><rect x="1" y="8" width="1" height="1" fill="#868686"/><rect x="2" y="8" width="6" height="1" fill="#fff"/><rect x="8" y="8" width="1" height="1" fill="#868686"/><rect x="9" y="8" width="5" height="1" fill="#000"/><rect x="0" y="9" width="1" height="1" fill="#000"/><rect x="1" y="9" width="8" height="1" fill="#868686"/><rect x="9" y="9" width="1" height="1" fill="#000"/><rect x="11" y="9" width="4" height="1" fill="#000"/><rect x="0" y="10" width="10" height="1" fill="#000"/><rect x="13" y="10" width="2" height="1" fill="#000"/><rect x="5" y="11" width="1" height="1" fill="#000"/><rect x="9" y="11" width="2" height="1" fill="#fff"/><rect x="13" y="11" width="2" height="1" fill="#000"/><rect x="5" y="12" width="1" height="1" fill="#000"/><rect x="7" y="12" width="5" height="1" fill="#000"/><rect x="13" y="12" width="2" height="1" fill="#000"/><rect x="5" y="13" width="10" height="1" fill="#000"/></g></g>
<g transform="translate(305 55)" ><g shape-rendering="crispEdges"><rect x="4" y="0" width="6" height="1" fill="#000"/><rect x="4" y="1" width="1" height="1" fill="#000"/><rect x="5" y="1" width="4" height="1" fill="#fff"/><rect x="9" y="1" width="2" height="1" fill="#000"/><rect x="4" y="2" width="1" height="1" fill="#000"/><rect x="5" y="2" width="1" height="1" fill="#fff"/><rect x="6" y="2" width="2" height="1" fill="#000"/><rect x="8" y="2" width="1" height="1" fill="#fff"/><rect x="9" y="2" width="1" height="1" fill="#000"/><rect x="10" y="2" width="1" height="1" fill="#fff"/><rect x="11" y="2" width="1" height="1" fill="#000"/><rect x="4" y="3" width="1" height="1" fill="#000"/><rect x="5" y="3" width="4" height="1" fill="#fff"/><rect x="9" y="3" width="4" height="1" fill="#000"/><rect x="4" y="4" width="1" height="1" fill="#000"/><rect x="5" y="4" width="1" height="1" fill="#fff"/><rect x="6" y="4" width="2" height="1" fill="#000"/><rect x="8" y="4" width="4" height="1" fill="#fff"/><rect x="12" y="4" width="1" height="1" fill="#000"/><rect x="4" y="5" width="1" height="1" fill="#000"/><rect x="5" y="5" width="5" height="1" fill="#fff"/><rect x="10" y="5" width="1" height="1" fill="#000"/><rect x="11" y="5" width="1" height="1" fill="#fff"/><rect x="12" y="5" width="1" height="1" fill="#000"/><rect x="4" y="6" width="1" height="1" fill="#000"/><rect x="5" y="6" width="1" height="1" fill="#fff"/><rect x="6" y="6" width="5" height="1" fill="#000"/><rect x="11" y="6" width="1" height="1" fill="#fff"/><rect x="12" y="6" width="1" height="1" fill="#000"/><rect x="2" y="7" width="3" height="1" fill="#000"/><rect x="5" y="7" width="7" height="1" fill="#fff"/><rect x="12" y="7" width="3" height="1" fill="#000"/><rect x="1" y="8" width="15" height="1" fill="#000"/><rect x="1" y="9" width="1" height="1" fill="#000"/><rect x="2" y="9" width="1" height="1" fill="#fff"/><rect x="3" y="9" width="1" height="1" fill="#000"/><rect x="4" y="9" width="1" height="1" fill="#fff"/><rect x="5" y="9" width="1" height="1" fill="#000"/><rect x="6" y="9" width="1" height="1" fill="#fff"/><rect x="7" y="9" width="1" height="1" fill="#000"/><rect x="8" y="9" width="1" height="1" fill="#fff"/><rect x="9" y="9" width="1" height="1" fill="#000"/><rect x="10" y="9" width="1" height="1" fill="#fff"/><rect x="11" y="9" width="1" height="1" fill="#000"/><rect x="12" y="9" width="1" height="1" fill="#fff"/><rect x="13" y="9" width="1" height="1" fill="#000"/><rect x="14" y="9" width="1" height="1" fill="#fff"/><rect x="15" y="9" width="1" height="1" fill="#000"/><rect x="1" y="10" width="2" height="1" fill="#000"/><rect x="3" y="10" width="1" height="1" fill="#fff"/><rect x="4" y="10" width="1" height="1" fill="#000"/><rect x="5" y="10" width="1" height="1" fill="#fff"/><rect x="6" y="10" width="1" height="1" fill="#000"/><rect x="7" y="10" width="1" height="1" fill="#fff"/><rect x="8" y="10" width="1" height="1" fill="#000"/><rect x="9" y="10" width="1" height="1" fill="#fff"/><rect x="10" y="10" width="1" height="1" fill="#000"/><rect x="11" y="10" width="1" height="1" fill="#fff"/><rect x="12" y="10" width="1" height="1" fill="#000"/><rect x="13" y="10" width="1" height="1" fill="#fff"/><rect x="14" y="10" width="2" height="1" fill="#000"/><rect x="1" y="11" width="15" height="1" fill="#000"/><rect x="1" y="12" width="15" height="1" fill="#000"/><rect x="1" y="13" width="1" height="1" fill="#000"/><rect x="2" y="13" width="13" height="1" fill="#c6c6c6"/><rect x="15" y="13" width="1" height="1" fill="#000"/><rect x="2" y="14" width="13" height="1" fill="#000"/></g></g>
<g transform="translate(336 55)" ><g shape-rendering="crispEdges"><rect x="0" y="0" width="13" height="1" fill="#e4e2d4"/><rect x="13" y="0" width="1" height="1" fill="#000"/><rect x="14" y="0" width="2" height="1" fill="#e4e2d4"/><rect x="0" y="1" width="12" height="1" fill="#e4e2d4"/><rect x="12" y="1" width="3" height="1" fill="#000"/><rect x="15" y="1" width="1" height="1" fill="#e4e2d4"/><rect x="0" y="2" width="2" height="1" fill="#e4e2d4"/><rect x="2" y="2" width="1" height="1" fill="#000"/><rect x="3" y="2" width="8" height="1" fill="#e4e2d4"/><rect x="11" y="2" width="2" height="1" fill="#000"/><rect x="13" y="2" width="1" height="1" fill="#868686"/><rect x="14" y="2" width="2" height="1" fill="#000"/><rect x="0" y="3" width="10" height="1" fill="#e4e2d4"/><rect x="10" y="3" width="2" height="1" fill="#000"/><rect x="12" y="3" width="1" height="1" fill="#868686"/><rect x="13" y="3" width="3" height="1" fill="#000"/><rect x="0" y="4" width="3" height="1" fill="#e4e2d4"/><rect x="3" y="4" width="1" height="1" fill="#000"/><rect x="4" y="4" width="5" height="1" fill="#e4e2d4"/><rect x="9" y="4" width="6" height="1" fill="#000"/><rect x="15" y="4" width="1" height="1" fill="#e4e2d4"/><rect x="0" y="5" width="4" height="1" fill="#e4e2d4"/><rect x="4" y="5" width="1" height="1" fill="#000"/><rect x="5" y="5" width="3" height="1" fill="#e4e2d4"/><rect x="8" y="5" width="6" height="1" fill="#000"/><rect x="14" y="5" width="2" height="1" fill="#e4e2d4"/><rect x="0" y="6" width="2" height="1" fill="#e4e2d4"/><rect x="2" y="6" width="2" height="1" fill="#000"/><rect x="4" y="6" width="3" height="1" fill="#e4e2d4"/><rect x="7" y="6" width="6" height="1" fill="#000"/><rect x="13" y="6" width="3" height="1" fill="#e4e2d4"/><rect x="0" y="7" width="1" height="1" fill="#e4e2d4"/><rect x="1" y="7" width="1" height="1" fill="#000"/><rect x="2" y="7" width="2" height="1" fill="#e4e2d4"/><rect x="4" y="7" width="1" height="1" fill="#000"/><rect x="5" y="7" width="1" height="1" fill="#e4e2d4"/><rect x="6" y="7" width="6" height="1" fill="#000"/><rect x="12" y="7" width="4" height="1" fill="#e4e2d4"/><rect x="0" y="8" width="2" height="1" fill="#e4e2d4"/><rect x="2" y="8" width="2" height="1" fill="#000"/><rect x="4" y="8" width="1" height="1" fill="#e4e2d4"/><rect x="5" y="8" width="6" height="1" fill="#000"/><rect x="11" y="8" width="5" height="1" fill="#e4e2d4"/><rect x="0" y="9" width="2" height="1" fill="#e4e2d4"/><rect x="2" y="9" width="3" height="1" fill="#000"/><rect x="5" y="9" width="1" height="1" fill="#e4e2d4"/><rect x="6" y="9" width="4" height="1" fill="#000"/><rect x="10" y="9" width="6" height="1" fill="#e4e2d4"/><rect x="0" y="10" width="1" height="1" fill="#e4e2d4"/><rect x="1" y="10" width="5" height="1" fill="#000"/><rect x="6" y="10" width="1" height="1" fill="#e4e2d4"/><rect x="7" y="10" width="2" height="1" fill="#000"/><rect x="9" y="10" width="3" height="1" fill="#e4e2d4"/><rect x="12" y="10" width="1" height="1" fill="#000"/><rect x="13" y="10" width="3" height="1" fill="#e4e2d4"/><rect x="0" y="11" width="1" height="1" fill="#e4e2d4"/><rect x="1" y="11" width="2" height="1" fill="#000"/><rect x="3" y="11" width="1" height="1" fill="#e4e2d4"/><rect x="4" y="11" width="3" height="1" fill="#000"/><rect x="7" y="11" width="3" height="1" fill="#e4e2d4"/><rect x="10" y="11" width="1" height="1" fill="#000"/><rect x="11" y="11" width="5" height="1" fill="#e4e2d4"/><rect x="0" y="12" width="1" height="1" fill="#e4e2d4"/><rect x="1" y="12" width="7" height="1" fill="#000"/><rect x="8" y="12" width="1" height="1" fill="#e4e2d4"/><rect x="9" y="12" width="1" height="1" fill="#000"/><rect x="10" y="12" width="3" height="1" fill="#e4e2d4"/><rect x="13" y="12" width="1" height="1" fill="#000"/><rect x="14" y="12" width="2" height="1" fill="#e4e2d4"/><rect x="0" y="13" width="1" height="1" fill="#e4e2d4"/><rect x="1" y="13" width="8" height="1" fill="#000"/><rect x="9" y="13" width="2" height="1" fill="#e4e2d4"/><rect x="11" y="13" width="1" height="1" fill="#000"/><rect x="12" y="13" width="4" height="1" fill="#e4e2d4"/><rect x="0" y="14" width="16" height="1" fill="#e4e2d4"/><rect x="0" y="15" width="16" height="1" fill="#e4e2d4"/></g></g>
<rect x="359.5" y="55" width="16.5" height="16" fill="#e6e4d8"/>
<text x="362.3" y="69" font-family="Liberation Serif, serif" font-weight="bold" font-size="17" fill="#000">A</text>
<g transform="translate(6 82)" ><g fill="none" stroke="#000" stroke-width="1.3"><path d="M9 4H7Q4.8 4.2 4.5 7V10.5M2.3 8.3L4.5 10.7L6.7 8.3"/><path d="M8.5 15H10.5Q12.8 14.8 13 12V8.5M10.8 10.7L13 8.3L15.2 10.7"/></g></g>
<g transform="translate(6 106)" ><path d="M5.5 2.5V12.5L8 10.2L12.5 8.6Z" fill="#808080" stroke="#000" stroke-width="1.2" stroke-linejoin="miter"/><path d="M8.5 10.5L11 15" stroke="#000" stroke-width="2.2" stroke-dasharray="1.2 0.9"/></g>
<g transform="translate(6 130)" ><path d="M4 14L14 4" stroke="#000" stroke-width="1"/><rect x="3" y="13" width="2" height="2" fill="#000"/><rect x="13" y="3" width="2" height="2" fill="#000"/></g>
<g transform="translate(6 154)" ><g shape-rendering="crispEdges" fill="#000"><rect x="8" y="3" width="1" height="6"/><rect x="3" y="9" width="11" height="1"/><rect x="5" y="11" width="7" height="1"/><rect x="8" y="13" width="1" height="1"/></g></g>
<g transform="translate(6 178)" ><path d="M5.5 2.5H9.5L12.5 5.5V9.5L9.5 12.5H5.5L2.5 9.5V5.5Z" fill="none" stroke="#000" stroke-width="1.3"/><g shape-rendering="crispEdges" fill="#000"><rect x="13" y="7" width="3" height="1"/><rect x="7" y="13" width="1" height="1"/><rect x="5" y="14" width="5" height="1"/><rect x="7" y="16" width="1" height="1"/></g></g>
<g transform="translate(6 210)" ><g shape-rendering="crispEdges"><rect x="8" y="0" width="1" height="4" fill="#000"/><rect x="8" y="15" width="1" height="3" fill="#000"/></g><rect x="5.6" y="3.6" width="5.8" height="11" fill="#f4f2e6" stroke="#000" stroke-width="1.3"/></g>
<g transform="translate(6 234)" ><g shape-rendering="crispEdges" fill="#000"><rect x="8" y="0" width="1" height="7"/><rect x="3" y="7" width="11" height="1"/><rect x="3" y="10" width="11" height="1"/><rect x="8" y="11" width="1" height="7"/></g></g>
<g transform="translate(6 258)" ><path d="M8.5 0.5V2.5H10L12.5 4.7L9 6.5H8.5M9 6.5L12.5 8.7L9 10.5H8.5M9 10.5L12.5 12.7L10 14.5H8.5V17.5" fill="none" stroke="#000" stroke-width="1.3"/></g>
<g transform="translate(6 282)" ><g shape-rendering="crispEdges" fill="#000"><rect x="8" y="0" width="1" height="2"/><rect x="8" y="15" width="1" height="3"/><rect x="3" y="2" width="1" height="13"/><rect x="13" y="2" width="1" height="13"/></g><rect x="5.5" y="2" width="6" height="13" fill="#000"/><g fill="#fff"><rect x="6.3" y="3.0" width="0.9" height="0.9"/><rect x="8.0" y="3.0" width="0.9" height="0.9"/><rect x="9.7" y="3.0" width="0.9" height="0.9"/><rect x="7.1499999999999995" y="4.45" width="0.9" height="0.9"/><rect x="8.85" y="4.45" width="0.9" height="0.9"/><rect x="6.3" y="5.9" width="0.9" height="0.9"/><rect x="8.0" y="5.9" width="0.9" height="0.9"/><rect x="9.7" y="5.9" width="0.9" height="0.9"/><rect x="7.1499999999999995" y="7.35" width="0.9" height="0.9"/><rect x="8.85" y="7.35" width="0.9" height="0.9"/><rect x="6.3" y="8.8" width="0.9" height="0.9"/><rect x="8.0" y="8.8" width="0.9" height="0.9"/><rect x="9.7" y="8.8" width="0.9" height="0.9"/><rect x="7.1499999999999995" y="10.25" width="0.9" height="0.9"/><rect x="8.85" y="10.25" width="0.9" height="0.9"/><rect x="6.3" y="11.7" width="0.9" height="0.9"/><rect x="8.0" y="11.7" width="0.9" height="0.9"/><rect x="9.7" y="11.7" width="0.9" height="0.9"/><rect x="7.1499999999999995" y="13.15" width="0.9" height="0.9"/><rect x="8.85" y="13.15" width="0.9" height="0.9"/></g></g>
<g transform="translate(6 314)" ><path d="M3.5 1.5V16.5M3.5 1.5L17.5 8.5L3.5 16.5" fill="none" stroke="#000" stroke-width="1.3"/><g shape-rendering="crispEdges" fill="#000"><rect x="0" y="4" width="3" height="1"/><rect x="0" y="12" width="3" height="1"/><rect x="5" y="4" width="1" height="1"/><rect x="5" y="12" width="1" height="1"/></g></g>
<g transform="translate(6 338)" ><path d="M2.5 1V3H4L6 5L2.5 7.2H4.5L6 9L2.5 11.2H4.5L6 13L4 14.5H2.5V17" fill="none" stroke="#000" stroke-width="1.2"/><g transform="translate(18 0) scale(-1 1)"><g transform="translate(1 0)"><path d="M2.5 1V3H4L6 5L2.5 7.2H4.5L6 9L2.5 11.2H4.5L6 13L4 14.5H2.5V17" fill="none" stroke="#000" stroke-width="1.2"/></g></g><g shape-rendering="crispEdges" fill="#000"><rect x="7" y="2" width="1" height="13"/><rect x="9" y="2" width="1" height="13"/></g></g>
<g transform="translate(6 362)" ><g shape-rendering="crispEdges" fill="#000"><rect x="8" y="0" width="1" height="3"/><rect x="8" y="15" width="1" height="3"/></g><rect x="3.6" y="3.6" width="10" height="10.8" fill="#f4f2e6" stroke="#000" stroke-width="1.3"/></g>
<g transform="translate(6 386)" ><g shape-rendering="crispEdges" fill="#000"><rect x="1" y="4" width="2" height="1"/><rect x="15" y="4" width="2" height="1"/><rect x="1" y="13" width="2" height="1"/><rect x="15" y="13" width="2" height="1"/></g><rect x="2.8" y="2.8" width="12" height="12.6" fill="#f6f5ec" stroke="#000" stroke-width="1.4"/></g>
<text x="10.9" y="189.3" font-size="9" font-weight="bold" fill="#000" stroke="#000" stroke-width="0.3">1</text>
<text x="11.6" y="374.8" font-size="10" font-weight="bold" font-family="Liberation Mono, monospace" fill="#000" stroke="#000" stroke-width="0.3">1</text>
<text x="11.2" y="399" font-size="11.5" fill="#000">2</text>
</svg></div>
<div id="winR" style="left:377px;top:0;width:613px;height:469px;"><div style="left:0px;top:0px;width:512px;height:10px;background:linear-gradient(#7a8ee0 0px,#7a8ee0 0.8px,#a2b6f2 1.2px,#a2b6f2 3px);"></div>
<div style="left:603px;top:0px;width:10px;height:10px;background:#1b62e4;"></div>
<div style="left:512px;top:0px;width:101px;height:3px;background:#1b62e4;"></div>
<div style="left:542px;top:0px;width:14px;height:3px;background:#e0a868;"></div>
<div style="left:560px;top:0px;width:9px;height:3px;background:#3c86c8;"></div>
<div style="left:0px;top:2px;width:613px;height:467px;background:#0a4ae0;border-radius:7px 7px 0 0;"></div>
<div style="left:0px;top:2px;width:613px;height:30px;background:linear-gradient(#0840c0 0px,#0a50d8 0.8px,#2a84f8 1.6px,#1c78f4 3px,#0a62e8 4.5px,#0552da 7px,#0454de 10px,#0558e2 14px,#0660ec 19px,#0a68f4 22px,#0760ee 25px,#0450d6 27px,#0838b4 28.6px,#0838b4 30px);border-radius:7px 7px 0 0;"></div>
<span class="t" style="left:26.10px;top:11.00px;font-size:13.81px;color:#fff;font-weight:bold;letter-spacing:0.9px;transform:scaleX(0.8393);-webkit-text-stroke:0.2px #fff;">RFSim99 - unnamed.cct</span>
<div style="left:542px;top:8px;width:21px;height:21px;background:linear-gradient(135deg,#5a8af0,#2558d8 60%,#1c48c8);border:1px solid #fff;border-radius:3px;"></div>
<div style="left:565px;top:8px;width:21px;height:21px;background:linear-gradient(135deg,#5a8af0,#2558d8 60%,#1c48c8);border:1px solid #fff;border-radius:3px;"></div>
<div style="left:588px;top:8px;width:21px;height:21px;background:linear-gradient(135deg,#e8855c,#d04a20 60%,#c03a18);border:1px solid #fff;border-radius:3px;"></div>
<div style="left:0px;top:32px;width:4px;height:432px;background:linear-gradient(90deg,#0831b8,#1c4fdc 35%,#2a60e8 60%,#0a35c0);"></div>
<div style="left:4px;top:32px;width:607px;height:432px;background:#ece9d8;"></div>
<div style="left:610px;top:32px;width:1px;height:432px;background:#f4f8ff;"></div>
<div style="left:611px;top:32px;width:2px;height:432px;background:#0a3cd8;"></div>
<span class="t" style="left:9.50px;top:33.00px;font-size:11.63px;color:#000;transform:scaleX(0.8427);">File</span>
<span class="t" style="left:37.80px;top:33.00px;font-size:11.63px;color:#000;transform:scaleX(0.9166);">Graph Type</span>
<span class="t" style="left:105.70px;top:33.00px;font-size:11.63px;color:#000;transform:scaleX(0.8920);">Graph Limit Setup</span>
<span class="t" style="left:202.10px;top:33.00px;font-size:11.63px;color:#000;transform:scaleX(0.9089);">Tolerances</span>
<span class="t" style="left:266.10px;top:33.00px;font-size:11.63px;color:#000;transform:scaleX(0.8950);">Tools</span>
<span class="t" style="left:303.10px;top:33.00px;font-size:11.63px;color:#000;transform:scaleX(0.8931);">Options</span>
<span class="t" style="left:351.60px;top:33.00px;font-size:11.63px;color:#000;transform:scaleX(0.8694);">Help</span>
<div style="left:4px;top:52px;width:606px;height:1px;background:#aca899;"></div>
<div style="left:4px;top:53px;width:606px;height:26px;background:#fbfaf6;"></div>
<div class="vsep" style="left:33px;top:56px;width:2px;height:19px;"></div>
<div class="vsep" style="left:66px;top:56px;width:2px;height:19px;"></div>
<div class="vsep" style="left:172px;top:56px;width:2px;height:19px;"></div>
<div class="vsep" style="left:230px;top:56px;width:2px;height:19px;"></div>
<div class="vsep" style="left:363px;top:56px;width:2px;height:19px;"></div>
<div style="left:69px;top:54px;width:24px;height:23px;border:1px solid;border-color:#9d9b8f #fff #fff #9d9b8f;background-color:#fff;background-image:repeating-conic-gradient(#fff 0% 25%,#ece9d8 0% 50%);background-size:2px 2px;"></div>
<div style="left:202px;top:54px;width:24px;height:23px;border:1px solid;border-color:#9d9b8f #fff #fff #9d9b8f;background-color:#fff;background-image:repeating-conic-gradient(#fff 0% 25%,#ece9d8 0% 50%);background-size:2px 2px;"></div>
<div style="left:260px;top:54px;width:24px;height:23px;border:1px solid;border-color:#9d9b8f #fff #fff #9d9b8f;background-color:#fff;background-image:repeating-conic-gradient(#fff 0% 25%,#ece9d8 0% 50%);background-size:2px 2px;"></div>
<div class="raised" style="left:393px;top:54px;width:76px;height:22px;"></div>
<span class="t" style="left:404.00px;top:58.00px;font-size:13.08px;color:#000;transform:scaleX(0.8419);">Auto Match</span>
<div style="left:69px;top:79px;width:480px;height:340px;background:#000;"></div>
<svg width="990" height="469" viewBox="0 0 990 469" style="left:-377px;top:0;pointer-events:none">
<g shape-rendering="crispEdges">
<rect x="529" y="79" width="1" height="340" fill="#b0b0b0"/>
<rect x="601" y="79" width="1" height="340" fill="#b0b0b0"/>
<rect x="644" y="79" width="1" height="340" fill="#b0b0b0"/>
<rect x="673" y="79" width="1" height="340" fill="#b0b0b0"/>
<rect x="769" y="79" width="1" height="340" fill="#b0b0b0"/>
<rect x="841" y="79" width="1" height="340" fill="#b0b0b0"/>
<rect x="884" y="79" width="1" height="340" fill="#b0b0b0"/>
<rect x="913" y="79" width="1" height="340" fill="#b0b0b0"/>
<rect x="446" y="113" width="480" height="1" fill="#b8b8b8"/>
<rect x="446" y="147" width="480" height="1" fill="#b8b8b8"/>
<rect x="446" y="181" width="480" height="1" fill="#b8b8b8"/>
<rect x="446" y="215" width="480" height="1" fill="#b8b8b8"/>
<rect x="446" y="249" width="480" height="1" fill="#b8b8b8"/>
<rect x="446" y="283" width="480" height="1" fill="#b8b8b8"/>
<rect x="446" y="317" width="480" height="1" fill="#b8b8b8"/>
<rect x="446" y="351" width="480" height="1" fill="#b8b8b8"/>
<rect x="446" y="385" width="480" height="1" fill="#b8b8b8"/>
<rect x="457" y="79" width="1" height="340" fill="#fff"/>
<rect x="697" y="79" width="1" height="340" fill="#fff"/>
</g>
<clipPath id="gc"><rect x="446" y="79" width="480" height="340"/></clipPath>
<g clip-path="url(#gc)">
<polyline points="446.5,147.5 451.3,147.5 456.1,147.5 460.9,147.5 465.7,147.5 470.5,147.5 475.3,147.5 480.1,147.5 484.9,147.5 489.7,147.5 494.5,147.5 499.3,147.5 504.1,147.5 508.9,147.5 513.7,147.5 518.5,147.5 523.3,147.5 528.1,147.5 532.9,147.5 537.7,147.5 542.5,147.5 547.3,147.5 552.1,147.5 556.9,147.5 561.7,147.5 566.5,147.5 571.3,147.5 576.1,147.5 580.9,147.5 585.7,147.5 590.5,147.5 595.3,147.5 600.1,147.5 604.9,147.5 609.7,147.5 614.5,147.5 619.3,147.5 624.1,147.5 628.9,147.5 633.7,147.5 638.5,147.5 643.3,147.6 648.1,147.7 652.9,147.8 657.7,148.1 662.5,148.7 667.3,149.7 672.1,151.5 676.9,154.7 681.7,160.0 686.5,168.0 691.3,179.0 696.1,192.8 700.9,208.6 705.7,225.8 710.5,243.9 715.3,262.4 720.1,281.1 724.9,300.0 729.7,318.9 734.5,337.9 739.3,357.0 744.1,376.0 748.9,395.0 753.7,414.1 758.5,420.0 763.3,420.0 768.1,420.0 772.9,420.0 777.7,420.0 782.5,420.0 787.3,420.0 792.1,420.0 796.9,420.0 801.7,420.0 806.5,420.0 811.3,420.0 816.1,420.0 820.9,420.0 825.7,420.0 830.5,420.0 835.3,420.0 840.1,420.0 844.9,420.0 849.7,420.0 854.5,420.0 859.3,420.0 864.1,420.0 868.9,420.0 873.7,420.0 878.5,420.0 883.3,420.0 888.1,420.0 892.9,420.0 897.7,420.0 902.5,420.0 907.3,420.0 912.1,420.0 916.9,420.0 921.7,420.0 926.5,420.0" fill="none" stroke="#d01010" stroke-width="1.1"/>
<polyline points="446.5,420.0 451.3,420.0 456.1,420.0 460.9,420.0 465.7,420.0 470.5,420.0 475.3,420.0 480.1,420.0 484.9,420.0 489.7,420.0 494.5,420.0 499.3,420.0 504.1,420.0 508.9,420.0 513.7,420.0 518.5,420.0 523.3,420.0 528.1,420.0 532.9,420.0 537.7,420.0 542.5,420.0 547.3,420.0 552.1,420.0 556.9,420.0 561.7,420.0 566.5,420.0 571.3,420.0 576.1,420.0 580.9,420.0 585.7,420.0 590.5,420.0 595.3,420.0 600.1,420.0 604.9,420.0 609.7,420.0 614.5,420.0 619.3,414.1 624.1,395.0 628.9,376.0 633.7,357.0 638.5,337.9 643.3,318.9 648.1,300.0 652.9,281.1 657.7,262.4 662.5,243.9 667.3,225.8 672.1,208.6 676.9,192.8 681.7,179.0 686.5,168.0 691.3,160.0 696.1,154.7 700.9,151.5 705.7,149.7 710.5,148.7 715.3,148.1 720.1,147.8 724.9,147.7 729.7,147.6 734.5,147.5 739.3,147.5 744.1,147.5 748.9,147.5 753.7,147.5 758.5,147.5 763.3,147.5 768.1,147.5 772.9,147.5 777.7,147.5 782.5,147.5 787.3,147.5 792.1,147.5 796.9,147.5 801.7,147.5 806.5,147.5 811.3,147.5 816.1,147.5 820.9,147.5 825.7,147.5 830.5,147.5 835.3,147.5 840.1,147.5 844.9,147.5 849.7,147.5 854.5,147.5 859.3,147.5 864.1,147.5 868.9,147.5 873.7,147.5 878.5,147.5 883.3,147.5 888.1,147.5 892.9,147.5 897.7,147.5 902.5,147.5 907.3,147.5 912.1,147.5 916.9,147.5 921.7,147.5 926.5,147.5" fill="none" stroke="#1616c0" stroke-width="1.1"/>
</g>
<rect x="766.5" y="145.5" width="4" height="4" fill="#000" stroke="#fff" stroke-width="1" shape-rendering="crispEdges"/>
</svg>
<div style="left:4px;top:99px;width:65px;height:1px;background:#fff;"></div>
<div style="left:4px;top:147px;width:65px;height:1px;background:#d8d5c4;"></div>
<div style="left:4px;top:148px;width:65px;height:1px;background:#fff;"></div>
<div style="left:4px;top:228px;width:65px;height:1px;background:#b5b2a2;"></div>
<div style="left:4px;top:229px;width:65px;height:1px;background:#fff;"></div>
<div style="left:4px;top:99px;width:1px;height:320px;background:#fff;"></div>
<div style="left:549px;top:99px;width:61px;height:1px;background:#fff;"></div>
<div style="left:549px;top:147px;width:61px;height:1px;background:#d8d5c4;"></div>
<div style="left:549px;top:148px;width:61px;height:1px;background:#fff;"></div>
<div style="left:549px;top:228px;width:61px;height:1px;background:#b5b2a2;"></div>
<div style="left:549px;top:229px;width:61px;height:1px;background:#fff;"></div>
<div style="left:549px;top:99px;width:1px;height:320px;background:#fff;"></div>
<div style="left:5px;top:79px;width:62px;height:20px;background:#fff;border:1px solid;border-color:#7f7d72 #fff #fff #7f7d72;"></div>
<span class="t" style="left:8.10px;top:81.00px;font-size:13.08px;color:#000;transform:scaleX(0.7563);">10dB</span>
<div style="left:5px;top:270px;width:62px;height:18px;background:#fff;border:1px solid;border-color:#7f7d72 #b0ad9e #b0ad9e #7f7d72;"></div>
<span class="t" style="left:7.10px;top:272.00px;font-size:13.08px;color:#000;transform:scaleX(0.8110);">10Log(P</span>
<div style="left:50px;top:272px;width:16px;height:15px;background:#ece9d8;border:1px solid;border-color:#fff #6e6c62 #6e6c62 #fff;"></div>
<div style="left:5px;top:410px;width:62px;height:9px;background:#fff;overflow:hidden;border-top:1px solid #7f7d72;border-left:1px solid #7f7d72;"><span class="t" style="left:2.50px;top:0.00px;font-size:13.08px;color:#000;transform:scaleX(0.7394);">-40dB</span></div>
<div style="left:549px;top:79px;width:61px;height:20px;background:#fff;border:1px solid;border-color:#7f7d72 #fff #fff #7f7d72;"></div>
<span class="t" style="left:552.90px;top:81.00px;font-size:13.08px;color:#000;transform:scaleX(0.7563);">10dB</span>
<div style="left:549px;top:270px;width:61px;height:18px;background:#fff;border:1px solid;border-color:#7f7d72 #b0ad9e #b0ad9e #7f7d72;"></div>
<span class="t" style="left:549.80px;top:272.00px;font-size:13.08px;color:#000;transform:scaleX(0.7786);">10Log(P</span>
<div style="left:593px;top:272px;width:16px;height:15px;background:#ece9d8;border:1px solid;border-color:#fff #6e6c62 #6e6c62 #fff;"></div>
<div style="left:549px;top:407px;width:61px;height:12px;background:#fff;overflow:hidden;border-top:1px solid #7f7d72;border-left:1px solid #7f7d72;"><span class="t" style="left:0.40px;top:0.00px;font-size:13.08px;color:#000;transform:scaleX(0.7394);">-40dB</span></div>
<div style="left:12.899999999999977px;top:157.8px;width:12px;height:12px;border-radius:50%;background:linear-gradient(135deg,#6a6a60 0%,#8a897f 40%,#e8e6da 60%,#fff 100%);"></div>
<div style="left:14.099999999999966px;top:159.0px;width:9.6px;height:9.6px;background:#fff;border-radius:50%;"></div>
<span class="t" style="left:30.60px;top:156.00px;font-size:13.08px;color:#000;transform:scaleX(0.7443);">S11</span>
<div style="left:12.899999999999977px;top:173.8px;width:12px;height:12px;border-radius:50%;background:linear-gradient(135deg,#6a6a60 0%,#8a897f 40%,#e8e6da 60%,#fff 100%);"></div>
<div style="left:14.099999999999966px;top:175.0px;width:9.6px;height:9.6px;background:#fff;border-radius:50%;"></div>
<span class="t" style="left:30.60px;top:172.00px;font-size:13.08px;color:#000;transform:scaleX(0.7443);">S21</span>
<div style="left:12.899999999999977px;top:189.8px;width:12px;height:12px;border-radius:50%;background:linear-gradient(135deg,#6a6a60 0%,#8a897f 40%,#e8e6da 60%,#fff 100%);"></div>
<div style="left:14.099999999999966px;top:191.0px;width:9.6px;height:9.6px;background:#fff;border-radius:50%;"></div>
<span class="t" style="left:30.60px;top:188.00px;font-size:13.08px;color:#000;transform:scaleX(0.7443);">S12</span>
<div style="left:12.899999999999977px;top:205.8px;width:12px;height:12px;border-radius:50%;background:linear-gradient(135deg,#6a6a60 0%,#8a897f 40%,#e8e6da 60%,#fff 100%);"></div>
<div style="left:14.099999999999966px;top:207.0px;width:9.6px;height:9.6px;background:#fff;border-radius:50%;"></div>
<span class="t" style="left:30.60px;top:204.00px;font-size:13.08px;color:#000;transform:scaleX(0.7443);">S22</span>
<div style="left:555.2px;top:157.8px;width:12px;height:12px;border-radius:50%;background:linear-gradient(135deg,#6a6a60 0%,#8a897f 40%,#e8e6da 60%,#fff 100%);"></div>
<div style="left:556.4000000000001px;top:159.0px;width:9.6px;height:9.6px;background:#fff;border-radius:50%;"></div>
<span class="t" style="left:572.70px;top:156.00px;font-size:13.08px;color:#000;transform:scaleX(0.7443);">S11</span>
<div style="left:555.2px;top:173.8px;width:12px;height:12px;border-radius:50%;background:linear-gradient(135deg,#6a6a60 0%,#8a897f 40%,#e8e6da 60%,#fff 100%);"></div>
<div style="left:556.4000000000001px;top:175.0px;width:9.6px;height:9.6px;background:#fff;border-radius:50%;"></div>
<span class="t" style="left:572.70px;top:172.00px;font-size:13.08px;color:#000;transform:scaleX(0.7443);">S21</span>
<div style="left:555.2px;top:189.8px;width:12px;height:12px;border-radius:50%;background:linear-gradient(135deg,#6a6a60 0%,#8a897f 40%,#e8e6da 60%,#fff 100%);"></div>
<div style="left:556.4000000000001px;top:191.0px;width:9.6px;height:9.6px;background:#fff;border-radius:50%;"></div>
<span class="t" style="left:572.70px;top:188.00px;font-size:13.08px;color:#000;transform:scaleX(0.7443);">S12</span>
<div style="left:555.2px;top:205.8px;width:12px;height:12px;border-radius:50%;background:linear-gradient(135deg,#6a6a60 0%,#8a897f 40%,#e8e6da 60%,#fff 100%);"></div>
<div style="left:556.4000000000001px;top:207.0px;width:9.6px;height:9.6px;background:#fff;border-radius:50%;"></div>
<span class="t" style="left:572.70px;top:204.00px;font-size:13.08px;color:#000;transform:scaleX(0.7443);">S22</span>
<div style="left:16.899999999999977px;top:177.8px;width:4px;height:4px;background:#000;border-radius:50%;"></div>
<div style="left:559.2px;top:161.8px;width:4px;height:4px;background:#000;border-radius:50%;"></div>
<div style="left:28px;top:249px;width:9px;height:9px;background:#e80000;border-radius:50%;border:1px solid #700000;"></div>
<div style="left:573px;top:249px;width:9px;height:9px;background:#0000dc;border-radius:50%;border:1px solid #000070;"></div>
<div style="left:4px;top:419px;width:606px;height:45px;background:#ece9d8;"></div>
<div style="left:4px;top:419px;width:606px;height:1px;background:#fbfaf4;"></div>
<span class="t" style="left:4.90px;top:426.00px;font-size:13.08px;color:#000;transform:scaleX(0.7485);">Start:</span>
<div style="left:36px;top:422px;width:88px;height:20px;background:#fff;border:1px solid;border-color:#7f7d72 #fff #fff #7f7d72;"></div>
<span class="t" style="left:39.60px;top:424.00px;font-size:13.08px;color:#000;transform:scaleX(0.8076);">9MHz</span>
<div style="left:271px;top:419px;width:73px;height:21px;background:#fff;border-left:1px solid #7f7d72;border-bottom:1px solid #fff;"></div>
<span class="t" style="left:275.00px;top:421.00px;font-size:13.08px;color:#000;transform:scaleX(0.7984);">101 points</span>
<span class="t" style="left:469.80px;top:426.00px;font-size:13.08px;color:#000;transform:scaleX(0.7694);">Stop:</span>
<div style="left:501px;top:422px;width:88px;height:20px;background:#fff;border:1px solid;border-color:#7f7d72 #fff #fff #7f7d72;"></div>
<span class="t" style="left:504.70px;top:424.00px;font-size:13.08px;color:#000;transform:scaleX(0.8071);">900MHz</span>
<div style="left:4px;top:443px;width:606px;height:1px;background:#fff;"></div>
<div style="left:12px;top:445px;width:80px;height:18px;border:1px solid;border-color:#b8b5a4 #fff #fff #b8b5a4;"></div>
<div style="left:100px;top:445px;width:80px;height:18px;border:1px solid;border-color:#b8b5a4 #fff #fff #b8b5a4;"></div>
<div style="left:188px;top:445px;width:80px;height:18px;border:1px solid;border-color:#b8b5a4 #fff #fff #b8b5a4;"></div>
<span class="t" style="left:14.80px;top:446.00px;font-size:13.08px;color:#000;transform:scaleX(0.8168);">f=196.899MHz</span>
<span class="t" style="left:116.90px;top:446.00px;font-size:13.08px;color:#000;transform:scaleX(0.7552);">-47.6dB</span>
<span class="t" style="left:205.00px;top:446.00px;font-size:13.08px;color:#000;transform:scaleX(0.7725);">-75.5udB</span>
<div style="left:104px;top:449px;width:9px;height:9px;background:#e80000;border-radius:50%;border:1px solid #700000;"></div>
<div style="left:192px;top:449px;width:9px;height:9px;background:#0000dc;border-radius:50%;border:1px solid #000070;"></div>
<div style="left:275px;top:444px;width:314px;height:1px;background:#c9c6b6;"></div>
<div style="left:275px;top:445px;width:314px;height:17px;background:#f5f4ee;background-image:repeating-conic-gradient(#fff 0% 25%,#ece9d8 0% 50%);background-size:2px 2px;"></div>
<div style="left:275px;top:445px;width:17px;height:17px;background:#ece9d8;border:1px solid;border-color:#fff #6e6c62 #6e6c62 #fff;"></div>
<div style="left:469px;top:445px;width:17px;height:17px;background:#ece9d8;border:1px solid;border-color:#fff #6e6c62 #6e6c62 #fff;"></div>
<div style="left:572px;top:445px;width:17px;height:17px;background:#ece9d8;border:1px solid;border-color:#fff #6e6c62 #6e6c62 #fff;"></div>
<div style="left:592px;top:446px;width:17px;height:17px;background:#c4c2b6;"></div>
<div style="left:0px;top:464px;width:613px;height:5px;background:linear-gradient(#2a5ae0 0px,#0a3cd0 2px,#0a2fb0 5px);"></div>
<svg width="990" height="469" viewBox="0 0 990 469" style="left:-377px;top:0;pointer-events:none" font-family="Liberation Sans, sans-serif">
<g transform="translate(383 10)" ><rect x="0" y="0" width="16" height="16" fill="#c6c6c2"/><circle cx="8" cy="8" r="6.6" fill="#f1ecec" stroke="#6a6a50" stroke-width="1.1"/><path d="M1.5 8H14.5" stroke="#5a5a40" stroke-width="1.1" fill="none"/><path d="M14.4 8A4.4 4.4 0 0 0 6.5 3.2M14.4 8A4.4 4.4 0 0 1 6.5 12.8" stroke="#c8a0a8" stroke-width="1" fill="none"/><path d="M14.4 8A9 9 0 0 0 8 2M14.4 8A9 9 0 0 1 8 14" stroke="#d8c0c4" stroke-width="0.8" fill="none"/><path d="M9.5 12L13 8.5" stroke="#6a6a50" stroke-width="1.1"/></g>
<g transform="translate(385 57)" ><g shape-rendering="crispEdges"><rect x="0" y="0" width="7" height="1" fill="#000"/><rect x="11" y="0" width="3" height="1" fill="#e60000"/><rect x="0" y="1" width="1" height="1" fill="#000"/><rect x="1" y="1" width="5" height="1" fill="#fff"/><rect x="6" y="1" width="2" height="1" fill="#000"/><rect x="11" y="1" width="3" height="1" fill="#e60000"/><rect x="0" y="2" width="1" height="1" fill="#000"/><rect x="1" y="2" width="1" height="1" fill="#fff"/><rect x="2" y="2" width="2" height="1" fill="#000"/><rect x="4" y="2" width="2" height="1" fill="#fff"/><rect x="6" y="2" width="1" height="1" fill="#000"/><rect x="7" y="2" width="1" height="1" fill="#fff"/><rect x="8" y="2" width="1" height="1" fill="#000"/><rect x="11" y="2" width="3" height="1" fill="#e60000"/><rect x="0" y="3" width="1" height="1" fill="#000"/><rect x="1" y="3" width="7" height="1" fill="#fff"/><rect x="8" y="3" width="1" height="1" fill="#000"/><rect x="10" y="3" width="4" height="1" fill="#e60000"/><rect x="0" y="4" width="1" height="1" fill="#000"/><rect x="1" y="4" width="1" height="1" fill="#fff"/><rect x="2" y="4" width="2" height="1" fill="#000"/><rect x="4" y="4" width="1" height="1" fill="#fff"/><rect x="5" y="4" width="2" height="1" fill="#000"/><rect x="7" y="4" width="1" height="1" fill="#fff"/><rect x="8" y="4" width="1" height="1" fill="#000"/><rect x="9" y="4" width="7" height="1" fill="#e60000"/><rect x="0" y="5" width="1" height="1" fill="#000"/><rect x="1" y="5" width="7" height="1" fill="#fff"/><rect x="8" y="5" width="1" height="1" fill="#000"/><rect x="10" y="5" width="5" height="1" fill="#e60000"/><rect x="0" y="6" width="1" height="1" fill="#000"/><rect x="1" y="6" width="1" height="1" fill="#fff"/><rect x="2" y="6" width="4" height="1" fill="#000"/><rect x="6" y="6" width="2" height="1" fill="#fff"/><rect x="8" y="6" width="1" height="1" fill="#000"/><rect x="11" y="6" width="3" height="1" fill="#e60000"/><rect x="0" y="7" width="1" height="1" fill="#000"/><rect x="1" y="7" width="7" height="1" fill="#fff"/><rect x="8" y="7" width="1" height="1" fill="#000"/><rect x="12" y="7" width="1" height="1" fill="#e60000"/><rect x="0" y="8" width="1" height="1" fill="#000"/><rect x="1" y="8" width="7" height="1" fill="#fff"/><rect x="8" y="8" width="8" height="1" fill="#000"/><rect x="0" y="9" width="1" height="1" fill="#000"/><rect x="1" y="9" width="7" height="1" fill="#fff"/><rect x="8" y="9" width="2" height="1" fill="#000"/><rect x="10" y="9" width="4" height="1" fill="#c4c4f8"/><rect x="14" y="9" width="2" height="1" fill="#000"/><rect x="0" y="10" width="10" height="1" fill="#000"/><rect x="10" y="10" width="4" height="1" fill="#c4c4f8"/><rect x="14" y="10" width="2" height="1" fill="#000"/><rect x="8" y="11" width="8" height="1" fill="#000"/><rect x="8" y="12" width="8" height="1" fill="#000"/><rect x="8" y="13" width="2" height="1" fill="#000"/><rect x="10" y="13" width="4" height="1" fill="#fff"/><rect x="14" y="13" width="2" height="1" fill="#000"/><rect x="8" y="14" width="2" height="1" fill="#000"/><rect x="10" y="14" width="1" height="1" fill="#fff"/><rect x="11" y="14" width="2" height="1" fill="#000"/><rect x="13" y="14" width="1" height="1" fill="#fff"/><rect x="14" y="14" width="2" height="1" fill="#000"/><rect x="8" y="15" width="2" height="1" fill="#000"/><rect x="10" y="15" width="1" height="1" fill="#fff"/><rect x="11" y="15" width="2" height="1" fill="#000"/><rect x="13" y="15" width="1" height="1" fill="#fff"/><rect x="14" y="15" width="2" height="1" fill="#000"/></g></g>
<g transform="translate(419 57)" ><g shape-rendering="crispEdges"><rect x="4" y="0" width="6" height="1" fill="#000"/><rect x="4" y="1" width="1" height="1" fill="#000"/><rect x="5" y="1" width="4" height="1" fill="#fff"/><rect x="9" y="1" width="2" height="1" fill="#000"/><rect x="4" y="2" width="1" height="1" fill="#000"/><rect x="5" y="2" width="1" height="1" fill="#fff"/><rect x="6" y="2" width="2" height="1" fill="#000"/><rect x="8" y="2" width="1" height="1" fill="#fff"/><rect x="9" y="2" width="1" height="1" fill="#000"/><rect x="10" y="2" width="1" height="1" fill="#fff"/><rect x="11" y="2" width="1" height="1" fill="#000"/><rect x="4" y="3" width="1" height="1" fill="#000"/><rect x="5" y="3" width="4" height="1" fill="#fff"/><rect x="9" y="3" width="4" height="1" fill="#000"/><rect x="4" y="4" width="1" height="1" fill="#000"/><rect x="5" y="4" width="1" height="1" fill="#fff"/><rect x="6" y="4" width="2" height="1" fill="#000"/><rect x="8" y="4" width="4" height="1" fill="#fff"/><rect x="12" y="4" width="1" height="1" fill="#000"/><rect x="4" y="5" width="1" height="1" fill="#000"/><rect x="5" y="5" width="5" height="1" fill="#fff"/><rect x="10" y="5" width="1" height="1" fill="#000"/><rect x="11" y="5" width="1" height="1" fill="#fff"/><rect x="12" y="5" width="1" height="1" fill="#000"/><rect x="4" y="6" width="1" height="1" fill="#000"/><rect x="5" y="6" width="1" height="1" fill="#fff"/><rect x="6" y="6" width="5" height="1" fill="#000"/><rect x="11" y="6" width="1" height="1" fill="#fff"/><rect x="12" y="6" width="1" height="1" fill="#000"/><rect x="2" y="7" width="3" height="1" fill="#000"/><rect x="5" y="7" width="7" height="1" fill="#fff"/><rect x="12" y="7" width="3" height="1" fill="#000"/><rect x="1" y="8" width="15" height="1" fill="#000"/><rect x="1" y="9" width="1" height="1" fill="#000"/><rect x="2" y="9" width="1" height="1" fill="#fff"/><rect x="3" y="9" width="1" height="1" fill="#000"/><rect x="4" y="9" width="1" height="1" fill="#fff"/><rect x="5" y="9" width="1" height="1" fill="#000"/><rect x="6" y="9" width="1" height="1" fill="#fff"/><rect x="7" y="9" width="1" height="1" fill="#000"/><rect x="8" y="9" width="1" height="1" fill="#fff"/><rect x="9" y="9" width="1" height="1" fill="#000"/><rect x="10" y="9" width="1" height="1" fill="#fff"/><rect x="11" y="9" width="1" height="1" fill="#000"/><rect x="12" y="9" width="1" height="1" fill="#fff"/><rect x="13" y="9" width="1" height="1" fill="#000"/><rect x="14" y="9" width="1" height="1" fill="#fff"/><rect x="15" y="9" width="1" height="1" fill="#000"/><rect x="1" y="10" width="2" height="1" fill="#000"/><rect x="3" y="10" width="1" height="1" fill="#fff"/><rect x="4" y="10" width="1" height="1" fill="#000"/><rect x="5" y="10" width="1" height="1" fill="#fff"/><rect x="6" y="10" width="1" height="1" fill="#000"/><rect x="7" y="10" width="1" height="1" fill="#fff"/><rect x="8" y="10" width="1" height="1" fill="#000"/><rect x="9" y="10" width="1" height="1" fill="#fff"/><rect x="10" y="10" width="1" height="1" fill="#000"/><rect x="11" y="10" width="1" height="1" fill="#fff"/><rect x="12" y="10" width="1" height="1" fill="#000"/><rect x="13" y="10" width="1" height="1" fill="#fff"/><rect x="14" y="10" width="2" height="1" fill="#000"/><rect x="1" y="11" width="15" height="1" fill="#000"/><rect x="1" y="12" width="15" height="1" fill="#000"/><rect x="1" y="13" width="1" height="1" fill="#000"/><rect x="2" y="13" width="13" height="1" fill="#c6c6c6"/><rect x="15" y="13" width="1" height="1" fill="#000"/><rect x="2" y="14" width="13" height="1" fill="#000"/></g></g>
<g transform="translate(452 59)" ><g shape-rendering="crispEdges"><rect x="0" y="0" width="13" height="1" fill="#000"/><rect x="0" y="1" width="1" height="1" fill="#000"/><rect x="1" y="1" width="11" height="1" fill="#fff"/><rect x="12" y="1" width="1" height="1" fill="#000"/><rect x="0" y="2" width="1" height="1" fill="#000"/><rect x="1" y="2" width="11" height="1" fill="#fff"/><rect x="12" y="2" width="1" height="1" fill="#000"/><rect x="0" y="3" width="1" height="1" fill="#000"/><rect x="1" y="3" width="6" height="1" fill="#e60000"/><rect x="7" y="3" width="5" height="1" fill="#0000b4"/><rect x="12" y="3" width="1" height="1" fill="#000"/><rect x="0" y="4" width="1" height="1" fill="#000"/><rect x="1" y="4" width="6" height="1" fill="#fff"/><rect x="7" y="4" width="1" height="1" fill="#0000b4"/><rect x="8" y="4" width="1" height="1" fill="#e60000"/><rect x="9" y="4" width="3" height="1" fill="#fff"/><rect x="12" y="4" width="1" height="1" fill="#000"/><rect x="0" y="5" width="1" height="1" fill="#000"/><rect x="1" y="5" width="5" height="1" fill="#fff"/><rect x="6" y="5" width="1" height="1" fill="#0000b4"/><rect x="7" y="5" width="1" height="1" fill="#fff"/><rect x="8" y="5" width="1" height="1" fill="#e60000"/><rect x="9" y="5" width="3" height="1" fill="#fff"/><rect x="12" y="5" width="1" height="1" fill="#000"/><rect x="0" y="6" width="1" height="1" fill="#000"/><rect x="1" y="6" width="1" height="1" fill="#0000b4"/><rect x="2" y="6" width="4" height="1" fill="#fff"/><rect x="6" y="6" width="1" height="1" fill="#0000b4"/><rect x="7" y="6" width="2" height="1" fill="#fff"/><rect x="9" y="6" width="1" height="1" fill="#e60000"/><rect x="10" y="6" width="2" height="1" fill="#fff"/><rect x="12" y="6" width="1" height="1" fill="#000"/><rect x="0" y="7" width="1" height="1" fill="#000"/><rect x="1" y="7" width="1" height="1" fill="#fff"/><rect x="2" y="7" width="1" height="1" fill="#0000b4"/><rect x="3" y="7" width="2" height="1" fill="#fff"/><rect x="5" y="7" width="1" height="1" fill="#0000b4"/><rect x="6" y="7" width="3" height="1" fill="#fff"/><rect x="9" y="7" width="1" height="1" fill="#e60000"/><rect x="10" y="7" width="2" height="1" fill="#fff"/><rect x="12" y="7" width="1" height="1" fill="#000"/><rect x="0" y="8" width="1" height="1" fill="#000"/><rect x="1" y="8" width="2" height="1" fill="#fff"/><rect x="3" y="8" width="2" height="1" fill="#0000b4"/><rect x="5" y="8" width="5" height="1" fill="#fff"/><rect x="10" y="8" width="1" height="1" fill="#e60000"/><rect x="11" y="8" width="1" height="1" fill="#fff"/><rect x="12" y="8" width="1" height="1" fill="#000"/><rect x="0" y="9" width="1" height="1" fill="#000"/><rect x="1" y="9" width="9" height="1" fill="#fff"/><rect x="10" y="9" width="1" height="1" fill="#e60000"/><rect x="11" y="9" width="1" height="1" fill="#fff"/><rect x="12" y="9" width="1" height="1" fill="#000"/><rect x="0" y="10" width="1" height="1" fill="#000"/><rect x="1" y="10" width="10" height="1" fill="#fff"/><rect x="11" y="10" width="1" height="1" fill="#e60000"/><rect x="12" y="10" width="1" height="1" fill="#000"/><rect x="0" y="11" width="1" height="1" fill="#000"/><rect x="1" y="11" width="11" height="1" fill="#fff"/><rect x="12" y="11" width="1" height="1" fill="#000"/><rect x="0" y="12" width="13" height="1" fill="#000"/></g></g>
<g transform="translate(475.5 57.5)" ><circle cx="7" cy="7" r="6.2" fill="#fff" stroke="#000" stroke-width="1.3"/><path d="M1 7H13" stroke="#000" stroke-width="1.1"/><path d="M9.5 7L7.5 1.2M9.5 7L7.5 12.8" stroke="#000" stroke-width="1.1" fill="none"/><circle cx="9.6" cy="7" r="1.1" fill="#000"/></g>
<g transform="translate(500.5 57.5)" ><circle cx="7" cy="7" r="6" fill="#fff" stroke="#000" stroke-width="1.5" stroke-dasharray="2.2 1"/><g fill="#000"><rect x="6.5" y="6.5" width="1.1" height="1.1"/><rect x="9.2" y="8.1" width="1.1" height="1.1"/><rect x="6.5" y="9.6" width="1.1" height="1.1"/><rect x="3.8" y="8.1" width="1.1" height="1.1"/><rect x="3.8" y="5.0" width="1.1" height="1.1"/><rect x="6.5" y="3.4" width="1.1" height="1.1"/><rect x="9.2" y="5.0" width="1.1" height="1.1"/></g></g>
<g transform="translate(525 59)" ><g shape-rendering="crispEdges"><rect x="0" y="0" width="16" height="1" fill="#000"/><rect x="0" y="1" width="1" height="1" fill="#000"/><rect x="1" y="1" width="14" height="1" fill="#0000b4"/><rect x="15" y="1" width="1" height="1" fill="#000"/><rect x="0" y="2" width="1" height="1" fill="#000"/><rect x="1" y="2" width="1" height="1" fill="#0000b4"/><rect x="2" y="2" width="2" height="1" fill="#fff"/><rect x="4" y="2" width="8" height="1" fill="#0000b4"/><rect x="12" y="2" width="2" height="1" fill="#fff"/><rect x="14" y="2" width="1" height="1" fill="#0000b4"/><rect x="15" y="2" width="1" height="1" fill="#000"/><rect x="0" y="3" width="1" height="1" fill="#000"/><rect x="1" y="3" width="14" height="1" fill="#fff"/><rect x="15" y="3" width="1" height="1" fill="#000"/><rect x="0" y="4" width="1" height="1" fill="#000"/><rect x="1" y="4" width="1" height="1" fill="#fff"/><rect x="2" y="4" width="2" height="1" fill="#000"/><rect x="4" y="4" width="1" height="1" fill="#fff"/><rect x="5" y="4" width="2" height="1" fill="#000"/><rect x="7" y="4" width="1" height="1" fill="#fff"/><rect x="8" y="4" width="2" height="1" fill="#000"/><rect x="10" y="4" width="1" height="1" fill="#fff"/><rect x="11" y="4" width="3" height="1" fill="#000"/><rect x="14" y="4" width="1" height="1" fill="#fff"/><rect x="15" y="4" width="1" height="1" fill="#000"/><rect x="0" y="5" width="1" height="1" fill="#000"/><rect x="1" y="5" width="14" height="1" fill="#fff"/><rect x="15" y="5" width="1" height="1" fill="#000"/><rect x="0" y="6" width="1" height="1" fill="#000"/><rect x="1" y="6" width="1" height="1" fill="#fff"/><rect x="2" y="6" width="2" height="1" fill="#000"/><rect x="4" y="6" width="1" height="1" fill="#fff"/><rect x="5" y="6" width="2" height="1" fill="#000"/><rect x="7" y="6" width="1" height="1" fill="#fff"/><rect x="8" y="6" width="2" height="1" fill="#000"/><rect x="10" y="6" width="1" height="1" fill="#fff"/><rect x="11" y="6" width="3" height="1" fill="#000"/><rect x="14" y="6" width="1" height="1" fill="#fff"/><rect x="15" y="6" width="1" height="1" fill="#000"/><rect x="0" y="7" width="1" height="1" fill="#000"/><rect x="1" y="7" width="14" height="1" fill="#fff"/><rect x="15" y="7" width="1" height="1" fill="#000"/><rect x="0" y="8" width="1" height="1" fill="#000"/><rect x="1" y="8" width="1" height="1" fill="#fff"/><rect x="2" y="8" width="2" height="1" fill="#000"/><rect x="4" y="8" width="1" height="1" fill="#fff"/><rect x="5" y="8" width="2" height="1" fill="#000"/><rect x="7" y="8" width="1" height="1" fill="#fff"/><rect x="8" y="8" width="2" height="1" fill="#000"/><rect x="10" y="8" width="1" height="1" fill="#fff"/><rect x="11" y="8" width="3" height="1" fill="#000"/><rect x="14" y="8" width="1" height="1" fill="#fff"/><rect x="15" y="8" width="1" height="1" fill="#000"/><rect x="0" y="9" width="1" height="1" fill="#000"/><rect x="1" y="9" width="14" height="1" fill="#fff"/><rect x="15" y="9" width="1" height="1" fill="#000"/><rect x="0" y="10" width="1" height="1" fill="#000"/><rect x="1" y="10" width="1" height="1" fill="#fff"/><rect x="2" y="10" width="2" height="1" fill="#000"/><rect x="4" y="10" width="1" height="1" fill="#fff"/><rect x="5" y="10" width="2" height="1" fill="#000"/><rect x="7" y="10" width="1" height="1" fill="#fff"/><rect x="8" y="10" width="2" height="1" fill="#000"/><rect x="10" y="10" width="1" height="1" fill="#fff"/><rect x="11" y="10" width="3" height="1" fill="#000"/><rect x="14" y="10" width="1" height="1" fill="#fff"/><rect x="15" y="10" width="1" height="1" fill="#000"/><rect x="0" y="11" width="1" height="1" fill="#000"/><rect x="1" y="11" width="14" height="1" fill="#fff"/><rect x="15" y="11" width="1" height="1" fill="#000"/><rect x="0" y="12" width="16" height="1" fill="#000"/></g></g>
<rect x="558" y="57" width="15" height="15" fill="#f1efe6"/>
<text x="559.3" y="64.2" font-size="8.8" font-weight="bold" textLength="10" lengthAdjust="spacingAndGlyphs" fill="#000" stroke="#000" stroke-width="0.35">Lin</text>
<g transform="translate(559 68)" ><g shape-rendering="crispEdges" fill="#000"><rect x="0" y="2" width="13" height="1.5"/><rect x="0" y="0" width="1" height="3"/><rect x="2" y="0" width="1" height="3"/><rect x="4" y="0" width="1" height="3"/><rect x="6" y="0" width="1" height="3"/><rect x="8" y="0" width="1" height="3"/><rect x="10" y="0" width="1" height="3"/><rect x="12" y="0" width="1" height="3"/></g></g>
<text x="585.3" y="64.8" font-size="8.8" font-weight="bold" textLength="12" lengthAdjust="spacingAndGlyphs" fill="#000" stroke="#000" stroke-width="0.35">Log</text>
<g transform="translate(585 69)" ><g shape-rendering="crispEdges" fill="#000"><rect x="0" y="2" width="14" height="1.5"/><rect x="0" y="0" width="1" height="3"/><rect x="6" y="0" width="1" height="3"/><rect x="9" y="0" width="1" height="3"/><rect x="11" y="0" width="1" height="3"/><rect x="13" y="0" width="1" height="3"/></g></g>
<g transform="translate(616 57)" ><rect x="0" y="0" width="16" height="16" fill="#e6e4d6"/><path d="M7.5 1V14M2 8L7.5 13.5L13 8" fill="none" stroke="#000" stroke-width="1.05"/></g>
<g transform="translate(642.8 62.5)" ><path d="M0.5 0.5L4 4L0.5 7.5M13.5 0.5L10 4L13.5 7.5" fill="none" stroke="#000" stroke-width="1.2"/><rect x="6.5" y="3.5" width="1.1" height="1.1" fill="#000"/></g>
<g transform="translate(666 57)" ><rect x="0" y="0" width="16" height="16" fill="#e6e4d6"/><path d="M7.5 14V1M2 6.5L7.5 1L13 6.5" fill="none" stroke="#000" stroke-width="1.05"/></g>
<text x="690.3" y="70" font-size="13" font-weight="bold" fill="#c81000">?</text>
<text x="697.3" y="69.3" font-size="14.5" fill="#000090" stroke="#000090" stroke-width="0.3" textLength="5.5" lengthAdjust="spacingAndGlyphs">{</text>
<path d="M705.5 58V72" stroke="#000" stroke-width="2.6" stroke-dasharray="2 1.3" fill="none" shape-rendering="crispEdges"/>
<g transform="translate(716 57)" ><g shape-rendering="crispEdges"><rect x="3" y="0" width="1" height="1" fill="#000"/><rect x="5" y="0" width="2" height="1" fill="#000"/><rect x="8" y="0" width="1" height="1" fill="#000"/><rect x="1" y="1" width="10" height="1" fill="#000"/><rect x="1" y="2" width="2" height="1" fill="#000"/><rect x="3" y="2" width="1" height="1" fill="#868686"/><rect x="4" y="2" width="2" height="1" fill="#c6c6c6"/><rect x="6" y="2" width="1" height="1" fill="#868686"/><rect x="7" y="2" width="5" height="1" fill="#000"/><rect x="14" y="2" width="1" height="1" fill="#000"/><rect x="0" y="3" width="3" height="1" fill="#000"/><rect x="3" y="3" width="1" height="1" fill="#c6c6c6"/><rect x="4" y="3" width="2" height="1" fill="#868686"/><rect x="6" y="3" width="1" height="1" fill="#c6c6c6"/><rect x="7" y="3" width="3" height="1" fill="#000"/><rect x="13" y="3" width="2" height="1" fill="#000"/><rect x="1" y="4" width="2" height="1" fill="#000"/><rect x="3" y="4" width="1" height="1" fill="#c6c6c6"/><rect x="4" y="4" width="2" height="1" fill="#868686"/><rect x="6" y="4" width="1" height="1" fill="#c6c6c6"/><rect x="7" y="4" width="4" height="1" fill="#000"/><rect x="12" y="4" width="4" height="1" fill="#000"/><rect x="0" y="5" width="3" height="1" fill="#000"/><rect x="3" y="5" width="1" height="1" fill="#868686"/><rect x="4" y="5" width="2" height="1" fill="#c6c6c6"/><rect x="6" y="5" width="1" height="1" fill="#868686"/><rect x="7" y="5" width="2" height="1" fill="#000"/><rect x="10" y="5" width="4" height="1" fill="#000"/><rect x="15" y="5" width="1" height="1" fill="#000"/><rect x="1" y="6" width="8" height="1" fill="#000"/><rect x="10" y="6" width="2" height="1" fill="#000"/><rect x="15" y="6" width="1" height="1" fill="#000"/><rect x="2" y="7" width="1" height="1" fill="#000"/><rect x="4" y="7" width="2" height="1" fill="#000"/><rect x="7" y="7" width="1" height="1" fill="#000"/><rect x="9" y="7" width="3" height="1" fill="#000"/><rect x="15" y="7" width="1" height="1" fill="#000"/><rect x="6" y="8" width="2" height="1" fill="#000"/><rect x="10" y="8" width="2" height="1" fill="#000"/><rect x="14" y="8" width="2" height="1" fill="#000"/><rect x="0" y="9" width="1" height="1" fill="#000"/><rect x="2" y="9" width="1" height="1" fill="#000"/><rect x="7" y="9" width="5" height="1" fill="#000"/><rect x="15" y="9" width="1" height="1" fill="#000"/><rect x="0" y="10" width="5" height="1" fill="#000"/><rect x="9" y="10" width="3" height="1" fill="#000"/><rect x="15" y="10" width="1" height="1" fill="#000"/><rect x="1" y="11" width="5" height="1" fill="#000"/><rect x="8" y="11" width="1" height="1" fill="#000"/><rect x="10" y="11" width="3" height="1" fill="#000"/><rect x="14" y="11" width="2" height="1" fill="#000"/><rect x="0" y="12" width="2" height="1" fill="#000"/><rect x="4" y="12" width="3" height="1" fill="#000"/><rect x="10" y="12" width="6" height="1" fill="#000"/><rect x="0" y="13" width="1" height="1" fill="#000"/><rect x="5" y="13" width="3" height="1" fill="#000"/><rect x="9" y="13" width="1" height="1" fill="#000"/><rect x="11" y="13" width="2" height="1" fill="#000"/><rect x="14" y="13" width="1" height="1" fill="#000"/><rect x="0" y="14" width="1" height="1" fill="#000"/><rect x="5" y="14" width="2" height="1" fill="#000"/><rect x="13" y="14" width="1" height="1" fill="#000"/><rect x="0" y="15" width="2" height="1" fill="#000"/><rect x="4" y="15" width="3" height="1" fill="#000"/></g></g>
<g transform="translate(749 57)" ><rect x="0" y="0" width="16" height="16" fill="#e9e7da"/><circle cx="6" cy="5.2" r="3.4" fill="none" stroke="#000" stroke-width="1.1"/><path d="M9.5 3.5L12 5.5L13.2 8.5L12.5 11.5L10 13.5H7L4.8 11.5L4 8.5L5.5 5.5Z" fill="none" stroke="#000" stroke-width="1.1"/><path d="M4.5 7.5L8.5 3" stroke="#000" stroke-width="1"/></g>
<rect x="924" y="20" width="7" height="3" fill="#fff"/>
<rect x="947.5" y="14.5" width="10" height="9" fill="none" stroke="#fff" stroke-width="1.2"/><rect x="947" y="13" width="11" height="3" fill="#fff"/>
<path d="M970.5 13.5L980.5 23.5M980.5 13.5L970.5 23.5" stroke="#fff" stroke-width="2.2" fill="none"/>
<path d="M431.5 278H439.5L435.5 282Z" fill="#000"/>
<path d="M974.5 278H982.5L978.5 282Z" fill="#000"/>
<path d="M662.5 449.5V457.5L658.5 453.5Z" fill="#000"/>
<path d="M955.5 449.5V457.5L959.5 453.5Z" fill="#000"/>
<path d="M972 462L985 449M976 462L985 453M980 462L985 457" stroke="#8a887c" stroke-width="1.2" fill="none"/>
<path d="M973 462L985 450M977 462L985 454M981 462L985 458" stroke="#fff" stroke-width="0.8" fill="none"/>
</svg></div>
</div>
</body></html>
